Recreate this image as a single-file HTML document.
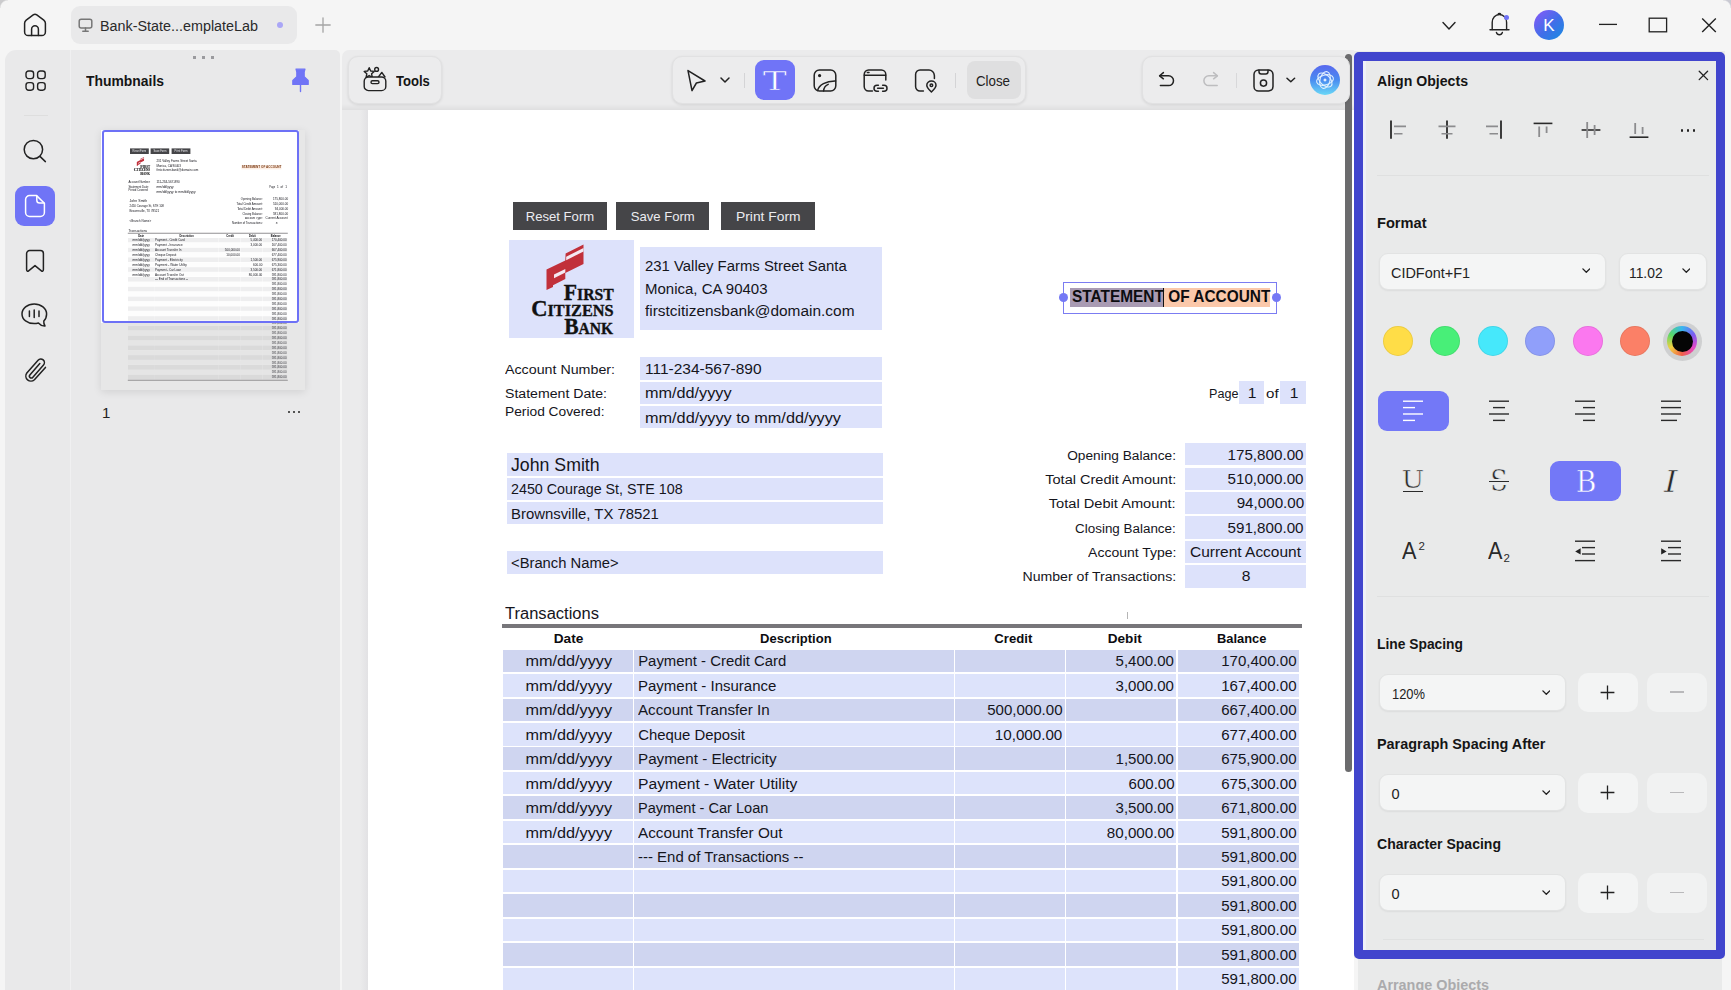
<!DOCTYPE html>
<html lang="en"><head><meta charset="utf-8"><title>Bank Statement - PDF Editor</title>
<style>
html,body{margin:0;padding:0}
body{width:1731px;height:990px;overflow:hidden;background:#f5f5f5;font-family:"Liberation Sans",sans-serif;position:relative;color:#1c1c1c}
.t{position:absolute;white-space:nowrap}
.b{position:absolute}
#page{position:absolute;left:368px;top:110px;width:986px;height:880px;overflow:hidden;background:#fff}
#pgsh{position:absolute;left:360px;top:110px;width:8px;height:880px;background:linear-gradient(90deg,rgba(0,0,0,0),rgba(60,50,80,.05))}
#thumb{position:absolute;left:101px;top:129.8px;width:203.5px;height:260.4px;overflow:hidden;background:#fff;box-shadow:0 2px 8px rgba(0,0,0,.10)}
#thumb .sc{position:absolute;left:0;top:0;width:1018px;height:1302px;transform:scale(0.2);transform-origin:0 0}
</style></head><body>
<svg class="b" style="left:23.0px;top:13.0px;" width="24.0" height="24.0" viewBox="0 0 24 24" fill="none" stroke="#222" stroke-width="1.5" stroke-linecap="round" stroke-linejoin="round"><path d="M1.6 10.2 C1.6 8.8 2.2 8 3.2 7.2 L10.2 1.9 C11.3 1.1 12.7 1.1 13.8 1.9 L20.8 7.2 C21.8 8 22.4 8.8 22.4 10.2 V19 a3.6 3.6 0 0 1 -3.6 3.6 H5.2 A3.6 3.6 0 0 1 1.6 19 Z"/><path d="M8.6 22.4 V16.2 a3.4 3.4 0 0 1 6.8 0 V22.4"/></svg>
<div class="b" style="left:71.0px;top:6.0px;width:226.0px;height:38.0px;background:#e9e9ea;border-radius:9px;"></div>
<svg class="b" style="left:78.0px;top:18.0px;stroke:#777;" width="16.0" height="15.0" viewBox="0 0 16 15" fill="none" stroke="#222" stroke-width="1.5" stroke-linecap="round" stroke-linejoin="round"><rect x="1.2" y="1.2" width="12.6" height="8.8" rx="2"/><path d="M7.5 10 V13 M4.8 13.2 H10.2"/></svg>
<div class="t" style="left:100.4px;top:18.7px;font-size:14.00px;line-height:14.00px;color:#2a2a2a;"><span style="display:inline-block;transform:scaleX(1.0252);transform-origin:left center;">Bank-State...emplateLab</span></div>
<div class="b" style="left:277.0px;top:22.0px;width:6.4px;height:6.4px;background:#aaa6f6;border-radius:50%;"></div>
<svg class="b" style="left:315.0px;top:17.0px;stroke:#a4a4a4;stroke-width:1.3;" width="16.0" height="16.0" viewBox="0 0 16 16" fill="none" stroke="#222" stroke-width="1.5" stroke-linecap="round" stroke-linejoin="round"><path d="M8 0.8 V15.2 M0.8 8 H15.2"/></svg>
<svg class="b" style="left:1442.0px;top:21.0px;stroke-width:1.4;" width="14.0" height="10.0" viewBox="0 0 14 10" fill="none" stroke="#222" stroke-width="1.5" stroke-linecap="round" stroke-linejoin="round"><path d="M1 1.5 L7 8 L13 1.5"/></svg>
<svg class="b" style="left:1489.0px;top:11.0px;stroke-width:1.4;" width="22.0" height="26.0" viewBox="0 0 22 26" fill="none" stroke="#222" stroke-width="1.5" stroke-linecap="round" stroke-linejoin="round"><path d="M3.2 18.6 V11.5 C3.2 6.8 6.4 3.6 10.4 3.6 C14.4 3.6 17.6 6.8 17.6 11.5 V18.6"/><path d="M1 18.8 H20"/><path d="M7.4 21.4 a3.1 3.1 0 0 0 6 0"/><path d="M9 3.5 a1.5 1.5 0 0 1 2.8 0"/></svg>
<div class="b" style="left:1503.6px;top:14.8px;width:5.6px;height:5.6px;background:#6f72f5;border-radius:50%;"></div>
<div class="b" style="left:1534.0px;top:10.0px;width:30.0px;height:30.0px;background:linear-gradient(135deg,#7d5cf6 10%,#3f6fe8 55%,#1c8ae2 95%);border-radius:50%;"></div>
<div class="t" style="left:1249.0px;width:600px;text-align:center;top:16.6px;font-size:17.00px;line-height:17.00px;color:#fff;"><span style="display:inline-block;">K</span></div>
<svg class="b" style="left:1598.0px;top:20.0px;stroke-width:1.3;stroke-linecap:butt;" width="20.0" height="9.0" viewBox="0 0 20 9" fill="none" stroke="#222" stroke-width="1.5" stroke-linecap="round" stroke-linejoin="round"><path d="M1 4.4 H19"/></svg>
<svg class="b" style="left:1648.0px;top:17.0px;stroke-width:1.3;stroke-linejoin:miter;" width="20.0" height="16.0" viewBox="0 0 20 16" fill="none" stroke="#222" stroke-width="1.5" stroke-linecap="round" stroke-linejoin="round"><rect x="1.2" y="1.2" width="17.4" height="13.6"/></svg>
<svg class="b" style="left:1701.0px;top:17.0px;stroke-width:1.4;stroke-linecap:butt;" width="16.0" height="16.0" viewBox="0 0 16 16" fill="none" stroke="#222" stroke-width="1.5" stroke-linecap="round" stroke-linejoin="round"><path d="M1.2 1.4 L14.8 15 M14.8 1.4 L1.2 15"/></svg>
<div class="b" style="left:0.0px;top:0.0px;width:8.0px;height:8.0px;background:radial-gradient(circle at 100% 100%,rgba(0,0,0,0) 7px,#cbcbcd 8.5px);"></div>
<div class="b" style="left:1723.0px;top:0.0px;width:8.0px;height:8.0px;background:radial-gradient(circle at 0% 100%,rgba(0,0,0,0) 7px,#c9c9d2 8.5px);"></div>
<div class="b" style="left:5.0px;top:50.0px;width:335.4px;height:945.0px;background:#e9e9ea;border-radius:11px 5px 0 0;"></div>
<div class="b" style="left:70.0px;top:50.0px;width:1.0px;height:945.0px;background:rgba(255,255,255,.35);"></div>
<svg class="b" style="left:24.5px;top:69.5px;stroke-width:1.4;" width="21.2" height="21.2" viewBox="0 0 21.2 21.2" fill="none" stroke="#222" stroke-width="1.5" stroke-linecap="round" stroke-linejoin="round"><rect x="1.0" y="1.0" width="7.6" height="7.6" rx="2.6"/><rect x="12.6" y="1.0" width="7.6" height="7.6" rx="2.6"/><rect x="1.0" y="12.6" width="7.6" height="7.6" rx="2.6"/><rect x="12.6" y="12.6" width="7.6" height="7.6" rx="2.6"/></svg>
<div class="b" style="left:24.0px;top:115.0px;width:24.0px;height:1.0px;background:#dedede;"></div>
<svg class="b" style="left:23.0px;top:138.5px;" width="24.0" height="24.0" viewBox="0 0 24 24" fill="none" stroke="#222" stroke-width="1.5" stroke-linecap="round" stroke-linejoin="round"><circle cx="10.4" cy="10.6" r="9.2"/><path d="M17.2 17.6 L22.4 22.6"/></svg>
<div class="b" style="left:15.0px;top:186.0px;width:40.0px;height:40.0px;background:#7074f6;border-radius:9px;"></div>
<svg class="b" style="left:24.0px;top:194.0px;stroke:#fff;stroke-width:1.5;" width="22.0" height="24.0" viewBox="0 0 22 24" fill="none" stroke="#222" stroke-width="1.5" stroke-linecap="round" stroke-linejoin="round"><path d="M5.6 1.6 H12.6 L20.4 9.2 V18.4 a4 4 0 0 1 -4 4 H5.6 a4 4 0 0 1 -4 -4 V5.6 a4 4 0 0 1 4 -4 Z"/><path d="M12.8 1.9 V6.2 a2.8 2.8 0 0 0 2.8 2.8 H20"/></svg>
<svg class="b" style="left:25.0px;top:249.0px;" width="20.0" height="24.0" viewBox="0 0 20 24" fill="none" stroke="#222" stroke-width="1.5" stroke-linecap="round" stroke-linejoin="round"><path d="M1.6 4.6 a3 3 0 0 1 3 -3 H15.4 a3 3 0 0 1 3 3 V20.6 C18.4 22 17.4 22.6 16.4 21.8 L10 16.6 L3.6 21.8 C2.6 22.6 1.6 22 1.6 20.6 Z"/></svg>
<svg class="b" style="left:21.0px;top:302.5px;stroke-width:1.5;" width="27.0" height="25.0" viewBox="0 0 27 25" fill="none" stroke="#222" stroke-width="1.5" stroke-linecap="round" stroke-linejoin="round"><path d="M13.2 1 C6.4 1 1 5.4 1 11 C1 16.6 6.4 20.6 13.2 20.6 C14.6 20.6 16 20.4 17.4 20 C18.8 21.6 21 23.2 24 23 C23 21.6 22.6 19.8 22.8 18 C24.6 16.2 25.6 13.8 25.6 11 C25.6 5.4 20 1 13.2 1 Z"/><path d="M8.4 8 V13.4 M13.2 7 V14.6 M18 8 V13.4"/></svg>
<svg class="b" style="left:23.6px;top:357.4px;stroke-width:1.4;" width="26.0" height="28.2" viewBox="0 0 24 26" fill="none" stroke="#222" stroke-width="1.5" stroke-linecap="round" stroke-linejoin="round"><path d="M19.8 9.6 L9.6 21 a4.7 4.7 0 0 1 -7 -6.2 L13 3 a3.3 3.3 0 0 1 5 4.4 L8 18.8 a1.7 1.7 0 0 1 -2.6 -2.2 L14.6 6"/></svg>
<div class="b" style="left:193.0px;top:55.6px;width:2.6px;height:3.8px;background:#9a9a9e;"></div>
<div class="b" style="left:202.0px;top:55.6px;width:2.6px;height:3.8px;background:#9a9a9e;"></div>
<div class="b" style="left:211.0px;top:55.6px;width:2.6px;height:3.8px;background:#9a9a9e;"></div>
<div class="t" style="left:86.2px;top:73.9px;font-size:14.30px;line-height:14.30px;font-weight:700;color:#151515;"><span style="display:inline-block;transform:scaleX(0.9722);transform-origin:left center;">Thumbnails</span></div>
<svg class="b" style="left:291.0px;top:68.0px;" width="19.0" height="25.0" viewBox="0 0 19 25" fill="none" stroke="#222" stroke-width="1.5" stroke-linecap="round" stroke-linejoin="round"><path d="M5 1.2 H14 L13.2 4 V8.6 L17.2 12.4 V16.4 H1.8 V12.4 L5.8 8.6 V4 Z" fill="#7074f6" stroke="#7074f6" stroke-width="1.2"/><path d="M9.5 16.4 V23.6" stroke="#7074f6" stroke-width="1.4"/></svg>
<div class="t" style="left:102.0px;top:405.3px;font-size:15.00px;line-height:15.00px;color:#222;"><span style="display:inline-block;">1</span></div>
<div class="b" style="left:287.5px;top:411.2px;width:2.3px;height:2.3px;background:#222;border-radius:50%;"></div>
<div class="b" style="left:292.5px;top:411.2px;width:2.3px;height:2.3px;background:#222;border-radius:50%;"></div>
<div class="b" style="left:297.5px;top:411.2px;width:2.3px;height:2.3px;background:#222;border-radius:50%;"></div>
<div id="thumb"><div class="sc">
<div class="b" style="left:145.2px;top:92.0px;width:93.8px;height:28.0px;background:#454548;"></div>
<div class="t" style="left:-107.9px;width:600px;text-align:center;top:99.7px;font-size:13.40px;line-height:13.40px;color:#ececf0;"><span style="display:inline-block;transform:scaleX(0.9778);transform-origin:center center;">Reset Form</span></div>
<div class="b" style="left:248.0px;top:92.0px;width:93.2px;height:28.0px;background:#454548;"></div>
<div class="t" style="left:-5.4px;width:600px;text-align:center;top:99.7px;font-size:13.40px;line-height:13.40px;color:#ececf0;"><span style="display:inline-block;transform:scaleX(0.9773);transform-origin:center center;">Save Form</span></div>
<div class="b" style="left:353.0px;top:92.0px;width:93.6px;height:28.0px;background:#454548;"></div>
<div class="t" style="left:99.8px;width:600px;text-align:center;top:99.7px;font-size:13.40px;line-height:13.40px;color:#ececf0;"><span style="display:inline-block;transform:scaleX(1.0320);transform-origin:center center;">Print Form</span></div>
<div class="b" style="left:141.4px;top:129.6px;width:124.6px;height:98.0px;background:transparent;"></div>
<svg class="b" style="left:177.0px;top:133.0px" width="40" height="48" viewBox="545 243 40 48"><polygon fill="#c1303a" points="546.5,290 546.5,269.5 565.3,260.6 565.6,253.5 583.5,244.5 583.5,264 565.3,273 565.3,279 553,285.2 553,287 "/><polygon fill="#f4e9f2" points="566.2,256.7 583.5,248 583.5,251.4 566.2,260.3"/><polygon fill="#f4e9f2" points="554,274.4 565.3,268.9 565.3,272.6 554,278.2"/></svg>
<div class="t" style="left:-354.4px;width:600px;text-align:right;top:174.5px;font-size:16.30px;line-height:16.30px;font-family:'Liberation Serif', serif;font-weight:700;color:#111;-webkit-text-stroke:0.35px #111;"><span style="display:inline-block;transform:scaleX(0.9659);transform-origin:right center;"><span style="font-size:22.5px">F</span>IRST</span></div>
<div class="t" style="left:-354.4px;width:600px;text-align:right;top:191.1px;font-size:16.30px;line-height:16.30px;font-family:'Liberation Serif', serif;font-weight:700;color:#111;-webkit-text-stroke:0.35px #111;"><span style="display:inline-block;"><span style="font-size:22.5px">C</span>ITIZENS</span></div>
<div class="t" style="left:-354.4px;width:600px;text-align:right;top:208.9px;font-size:16.30px;line-height:16.30px;font-family:'Liberation Serif', serif;font-weight:700;color:#111;-webkit-text-stroke:0.35px #111;"><span style="display:inline-block;transform:scaleX(0.9570);transform-origin:right center;"><span style="font-size:22.5px">B</span>ANK</span></div>
<div class="b" style="left:272.0px;top:137.0px;width:242.0px;height:83.0px;background:transparent;"></div>
<div class="t" style="left:277.0px;top:149.4px;font-size:14.90px;line-height:14.90px;color:#15151c;"><span style="display:inline-block;">231 Valley Farms Street Santa</span></div>
<div class="t" style="left:277.0px;top:171.8px;font-size:14.90px;line-height:14.90px;color:#15151c;"><span style="display:inline-block;transform:scaleX(1.0067);transform-origin:left center;">Monica, CA 90403</span></div>
<div class="t" style="left:277.0px;top:193.8px;font-size:14.90px;line-height:14.90px;color:#15151c;"><span style="display:inline-block;transform:scaleX(1.0363);transform-origin:left center;">firstcitizensbank@domain.com</span></div>
<div class="t" style="left:137.0px;top:252.8px;font-size:13.70px;line-height:13.70px;color:#15151c;"><span style="display:inline-block;transform:scaleX(1.0402);transform-origin:left center;">Account Number:</span></div>
<div class="t" style="left:137.0px;top:277.4px;font-size:13.70px;line-height:13.70px;color:#15151c;"><span style="display:inline-block;transform:scaleX(1.0311);transform-origin:left center;">Statement Date:</span></div>
<div class="t" style="left:137.0px;top:295.4px;font-size:13.70px;line-height:13.70px;color:#15151c;"><span style="display:inline-block;transform:scaleX(1.0058);transform-origin:left center;">Period Covered:</span></div>
<div class="b" style="left:272.0px;top:247.0px;width:242.0px;height:23.0px;background:transparent;"></div>
<div class="b" style="left:272.0px;top:272.0px;width:242.0px;height:21.6px;background:transparent;"></div>
<div class="b" style="left:272.0px;top:296.0px;width:242.0px;height:22.0px;background:transparent;"></div>
<div class="t" style="left:277.0px;top:252.0px;font-size:14.90px;line-height:14.90px;color:#15151c;"><span style="display:inline-block;transform:scaleX(1.0397);transform-origin:left center;">111-234-567-890</span></div>
<div class="t" style="left:277.0px;top:276.4px;font-size:14.90px;line-height:14.90px;color:#15151c;"><span style="display:inline-block;transform:scaleX(1.0902);transform-origin:left center;">mm/dd/yyyy</span></div>
<div class="t" style="left:277.0px;top:301.0px;font-size:14.90px;line-height:14.90px;color:#15151c;"><span style="display:inline-block;transform:scaleX(1.0916);transform-origin:left center;">mm/dd/yyyy to mm/dd/yyyy</span></div>
<div class="b" style="left:702.0px;top:178.4px;width:200.0px;height:18.2px;background:#fdeee4;"></div>
<div class="t" style="left:703.6px;top:178.9px;font-size:15.90px;line-height:15.90px;font-weight:700;color:#7c3a12;"><span style="display:inline-block;transform:scaleX(0.9702);transform-origin:left center;">STATEMENT OF ACCOUNT</span></div>
<div class="b" style="left:871.0px;top:271.4px;width:24.6px;height:22.2px;background:transparent;"></div>
<div class="b" style="left:912.0px;top:271.4px;width:25.6px;height:22.2px;background:transparent;"></div>
<div class="t" style="left:840.6px;top:277.4px;font-size:13.70px;line-height:13.70px;color:#15151c;"><span style="display:inline-block;transform:scaleX(0.9196);transform-origin:left center;">Page</span></div>
<div class="t" style="left:898.0px;top:277.4px;font-size:13.70px;line-height:13.70px;color:#15151c;"><span style="display:inline-block;transform:scaleX(1.1031);transform-origin:left center;">of</span></div>
<div class="t" style="left:584.4px;width:600px;text-align:center;top:276.4px;font-size:14.90px;line-height:14.90px;color:#15151c;"><span style="display:inline-block;transform:scaleX(1.0500);transform-origin:center center;">1</span></div>
<div class="t" style="left:626.2px;width:600px;text-align:center;top:276.4px;font-size:14.90px;line-height:14.90px;color:#15151c;"><span style="display:inline-block;transform:scaleX(1.0500);transform-origin:center center;">1</span></div>
<div class="b" style="left:139.0px;top:343.4px;width:376.0px;height:22.2px;background:transparent;"></div>
<div class="b" style="left:139.0px;top:368.0px;width:376.0px;height:22.0px;background:transparent;"></div>
<div class="b" style="left:139.0px;top:392.4px;width:376.0px;height:22.0px;background:transparent;"></div>
<div class="b" style="left:139.0px;top:441.0px;width:376.0px;height:22.6px;background:transparent;"></div>
<div class="t" style="left:143.0px;top:347.1px;font-size:17.60px;line-height:17.60px;color:#15151c;"><span style="display:inline-block;transform:scaleX(1.0066);transform-origin:left center;">John Smith</span></div>
<div class="t" style="left:143.0px;top:372.4px;font-size:14.90px;line-height:14.90px;color:#15151c;"><span style="display:inline-block;transform:scaleX(0.9597);transform-origin:left center;">2450 Courage St, STE 108</span></div>
<div class="t" style="left:143.0px;top:397.0px;font-size:14.90px;line-height:14.90px;color:#15151c;"><span style="display:inline-block;">Brownsville, TX 78521</span></div>
<div class="t" style="left:143.0px;top:445.8px;font-size:14.90px;line-height:14.90px;color:#15151c;"><span style="display:inline-block;transform:scaleX(0.9923);transform-origin:left center;">&lt;Branch Name&gt;</span></div>
<div class="b" style="left:817.0px;top:333.0px;width:121.0px;height:22.4px;background:transparent;"></div>
<div class="t" style="left:208.0px;width:600px;text-align:right;top:338.8px;font-size:13.70px;line-height:13.70px;color:#15151c;"><span style="display:inline-block;">Opening Balance:</span></div>
<div class="t" style="left:336.0px;width:600px;text-align:right;top:337.8px;font-size:14.90px;line-height:14.90px;color:#15151c;"><span style="display:inline-block;transform:scaleX(1.0197);transform-origin:right center;">175,800.00</span></div>
<div class="b" style="left:817.0px;top:357.6px;width:121.0px;height:22.4px;background:transparent;"></div>
<div class="t" style="left:208.0px;width:600px;text-align:right;top:363.2px;font-size:13.70px;line-height:13.70px;color:#15151c;"><span style="display:inline-block;transform:scaleX(1.0629);transform-origin:right center;">Total Credit Amount:</span></div>
<div class="t" style="left:336.0px;width:600px;text-align:right;top:362.2px;font-size:14.90px;line-height:14.90px;color:#15151c;"><span style="display:inline-block;transform:scaleX(1.0197);transform-origin:right center;">510,000.00</span></div>
<div class="b" style="left:817.0px;top:382.0px;width:121.0px;height:22.4px;background:transparent;"></div>
<div class="t" style="left:208.0px;width:600px;text-align:right;top:387.4px;font-size:13.70px;line-height:13.70px;color:#15151c;"><span style="display:inline-block;transform:scaleX(1.0699);transform-origin:right center;">Total Debit Amount:</span></div>
<div class="t" style="left:336.0px;width:600px;text-align:right;top:386.4px;font-size:14.90px;line-height:14.90px;color:#15151c;"><span style="display:inline-block;transform:scaleX(1.0204);transform-origin:right center;">94,000.00</span></div>
<div class="b" style="left:817.0px;top:406.4px;width:121.0px;height:22.4px;background:transparent;"></div>
<div class="t" style="left:208.0px;width:600px;text-align:right;top:412.0px;font-size:13.70px;line-height:13.70px;color:#15151c;"><span style="display:inline-block;transform:scaleX(0.9794);transform-origin:right center;">Closing Balance:</span></div>
<div class="t" style="left:336.0px;width:600px;text-align:right;top:411.0px;font-size:14.90px;line-height:14.90px;color:#15151c;"><span style="display:inline-block;transform:scaleX(1.0197);transform-origin:right center;">591,800.00</span></div>
<div class="b" style="left:817.0px;top:431.0px;width:121.0px;height:22.4px;background:transparent;"></div>
<div class="t" style="left:208.0px;width:600px;text-align:right;top:436.2px;font-size:13.70px;line-height:13.70px;color:#15151c;"><span style="display:inline-block;transform:scaleX(1.0220);transform-origin:right center;">Account Type:</span></div>
<div class="t" style="left:821.6px;top:435.2px;font-size:14.90px;line-height:14.90px;color:#15151c;"><span style="display:inline-block;transform:scaleX(1.0395);transform-origin:left center;">Current Account</span></div>
<div class="b" style="left:817.0px;top:455.4px;width:121.0px;height:22.4px;background:transparent;"></div>
<div class="t" style="left:208.0px;width:600px;text-align:right;top:460.4px;font-size:13.70px;line-height:13.70px;color:#15151c;"><span style="display:inline-block;transform:scaleX(1.0301);transform-origin:right center;">Number of Transactions:</span></div>
<div class="t" style="left:578.4px;width:600px;text-align:center;top:459.4px;font-size:14.90px;line-height:14.90px;color:#15151c;"><span style="display:inline-block;transform:scaleX(1.0500);transform-origin:center center;">8</span></div>
<div class="t" style="left:137.4px;top:496.4px;font-size:15.60px;line-height:15.60px;color:#15151c;"><span style="display:inline-block;transform:scaleX(1.0597);transform-origin:left center;">Transactions</span></div>
<div class="b" style="left:134.0px;top:513.8px;width:800.0px;height:4.4px;background:#77767a;"></div>
<div class="t" style="left:-99.8px;width:600px;text-align:center;top:521.7px;font-size:13.40px;line-height:13.40px;font-weight:700;color:#0c0c10;"><span style="display:inline-block;transform:scaleX(1.0196);transform-origin:center center;">Date</span></div>
<div class="t" style="left:127.4px;width:600px;text-align:center;top:521.7px;font-size:13.40px;line-height:13.40px;font-weight:700;color:#0c0c10;"><span style="display:inline-block;transform:scaleX(0.9719);transform-origin:center center;">Description</span></div>
<div class="t" style="left:345.4px;width:600px;text-align:center;top:521.7px;font-size:13.40px;line-height:13.40px;font-weight:700;color:#0c0c10;"><span style="display:inline-block;transform:scaleX(0.9818);transform-origin:center center;">Credit</span></div>
<div class="t" style="left:456.6px;width:600px;text-align:center;top:521.7px;font-size:13.40px;line-height:13.40px;font-weight:700;color:#0c0c10;"><span style="display:inline-block;transform:scaleX(1.0154);transform-origin:center center;">Debit</span></div>
<div class="t" style="left:573.7px;width:600px;text-align:center;top:521.7px;font-size:13.40px;line-height:13.40px;font-weight:700;color:#0c0c10;"><span style="display:inline-block;transform:scaleX(0.9618);transform-origin:center center;">Balance</span></div>
<div class="b" style="left:135.0px;top:539.6px;width:129.6px;height:22.5px;background:#eeeeef;"></div>
<div class="b" style="left:266.4px;top:539.6px;width:319.2px;height:22.5px;background:#eeeeef;"></div>
<div class="b" style="left:587.0px;top:539.6px;width:110.0px;height:22.5px;background:#eeeeef;"></div>
<div class="b" style="left:698.4px;top:539.6px;width:109.6px;height:22.5px;background:#eeeeef;"></div>
<div class="b" style="left:810.0px;top:539.6px;width:120.8px;height:22.5px;background:#eeeeef;"></div>
<div class="t" style="left:-99.7px;width:600px;text-align:center;top:544.4px;font-size:14.90px;line-height:14.90px;color:#15151c;"><span style="display:inline-block;transform:scaleX(1.0902);transform-origin:center center;">mm/dd/yyyy</span></div>
<div class="t" style="left:270.2px;top:544.4px;font-size:14.90px;line-height:14.90px;color:#15151c;"><span style="display:inline-block;">Payment - Credit Card</span></div>
<div class="t" style="left:206.2px;width:600px;text-align:right;top:544.4px;font-size:14.90px;line-height:14.90px;color:#15151c;"><span style="display:inline-block;transform:scaleX(1.0074);transform-origin:right center;">5,400.00</span></div>
<div class="t" style="left:328.6px;width:600px;text-align:right;top:544.4px;font-size:14.90px;line-height:14.90px;color:#15151c;"><span style="display:inline-block;transform:scaleX(1.0117);transform-origin:right center;">170,400.00</span></div>
<div class="b" style="left:135.0px;top:564.1px;width:129.6px;height:22.5px;background:#fdfdfd;"></div>
<div class="b" style="left:266.4px;top:564.1px;width:319.2px;height:22.5px;background:#fdfdfd;"></div>
<div class="b" style="left:587.0px;top:564.1px;width:110.0px;height:22.5px;background:#fdfdfd;"></div>
<div class="b" style="left:698.4px;top:564.1px;width:109.6px;height:22.5px;background:#fdfdfd;"></div>
<div class="b" style="left:810.0px;top:564.1px;width:120.8px;height:22.5px;background:#fdfdfd;"></div>
<div class="t" style="left:-99.7px;width:600px;text-align:center;top:568.8px;font-size:14.90px;line-height:14.90px;color:#15151c;"><span style="display:inline-block;transform:scaleX(1.0902);transform-origin:center center;">mm/dd/yyyy</span></div>
<div class="t" style="left:270.2px;top:568.8px;font-size:14.90px;line-height:14.90px;color:#15151c;"><span style="display:inline-block;transform:scaleX(1.0073);transform-origin:left center;">Payment - Insurance</span></div>
<div class="t" style="left:206.2px;width:600px;text-align:right;top:568.8px;font-size:14.90px;line-height:14.90px;color:#15151c;"><span style="display:inline-block;transform:scaleX(1.0074);transform-origin:right center;">3,000.00</span></div>
<div class="t" style="left:328.6px;width:600px;text-align:right;top:568.8px;font-size:14.90px;line-height:14.90px;color:#15151c;"><span style="display:inline-block;transform:scaleX(1.0117);transform-origin:right center;">167,400.00</span></div>
<div class="b" style="left:135.0px;top:588.5px;width:129.6px;height:22.5px;background:#eeeeef;"></div>
<div class="b" style="left:266.4px;top:588.5px;width:319.2px;height:22.5px;background:#eeeeef;"></div>
<div class="b" style="left:587.0px;top:588.5px;width:110.0px;height:22.5px;background:#eeeeef;"></div>
<div class="b" style="left:698.4px;top:588.5px;width:109.6px;height:22.5px;background:#eeeeef;"></div>
<div class="b" style="left:810.0px;top:588.5px;width:120.8px;height:22.5px;background:#eeeeef;"></div>
<div class="t" style="left:-99.7px;width:600px;text-align:center;top:593.3px;font-size:14.90px;line-height:14.90px;color:#15151c;"><span style="display:inline-block;transform:scaleX(1.0902);transform-origin:center center;">mm/dd/yyyy</span></div>
<div class="t" style="left:270.2px;top:593.3px;font-size:14.90px;line-height:14.90px;color:#15151c;"><span style="display:inline-block;transform:scaleX(1.0192);transform-origin:left center;">Account Transfer In</span></div>
<div class="t" style="left:94.6px;width:600px;text-align:right;top:593.3px;font-size:14.90px;line-height:14.90px;color:#15151c;"><span style="display:inline-block;transform:scaleX(1.0117);transform-origin:right center;">500,000.00</span></div>
<div class="t" style="left:328.6px;width:600px;text-align:right;top:593.3px;font-size:14.90px;line-height:14.90px;color:#15151c;"><span style="display:inline-block;transform:scaleX(1.0117);transform-origin:right center;">667,400.00</span></div>
<div class="b" style="left:135.0px;top:613.0px;width:129.6px;height:22.5px;background:#fdfdfd;"></div>
<div class="b" style="left:266.4px;top:613.0px;width:319.2px;height:22.5px;background:#fdfdfd;"></div>
<div class="b" style="left:587.0px;top:613.0px;width:110.0px;height:22.5px;background:#fdfdfd;"></div>
<div class="b" style="left:698.4px;top:613.0px;width:109.6px;height:22.5px;background:#fdfdfd;"></div>
<div class="b" style="left:810.0px;top:613.0px;width:120.8px;height:22.5px;background:#fdfdfd;"></div>
<div class="t" style="left:-99.7px;width:600px;text-align:center;top:617.7px;font-size:14.90px;line-height:14.90px;color:#15151c;"><span style="display:inline-block;transform:scaleX(1.0902);transform-origin:center center;">mm/dd/yyyy</span></div>
<div class="t" style="left:270.2px;top:617.7px;font-size:14.90px;line-height:14.90px;color:#15151c;"><span style="display:inline-block;">Cheque Deposit</span></div>
<div class="t" style="left:94.6px;width:600px;text-align:right;top:617.7px;font-size:14.90px;line-height:14.90px;color:#15151c;"><span style="display:inline-block;transform:scaleX(1.0174);transform-origin:right center;">10,000.00</span></div>
<div class="t" style="left:328.6px;width:600px;text-align:right;top:617.7px;font-size:14.90px;line-height:14.90px;color:#15151c;"><span style="display:inline-block;transform:scaleX(1.0117);transform-origin:right center;">677,400.00</span></div>
<div class="b" style="left:135.0px;top:637.4px;width:129.6px;height:22.5px;background:#eeeeef;"></div>
<div class="b" style="left:266.4px;top:637.4px;width:319.2px;height:22.5px;background:#eeeeef;"></div>
<div class="b" style="left:587.0px;top:637.4px;width:110.0px;height:22.5px;background:#eeeeef;"></div>
<div class="b" style="left:698.4px;top:637.4px;width:109.6px;height:22.5px;background:#eeeeef;"></div>
<div class="b" style="left:810.0px;top:637.4px;width:120.8px;height:22.5px;background:#eeeeef;"></div>
<div class="t" style="left:-99.7px;width:600px;text-align:center;top:642.2px;font-size:14.90px;line-height:14.90px;color:#15151c;"><span style="display:inline-block;transform:scaleX(1.0902);transform-origin:center center;">mm/dd/yyyy</span></div>
<div class="t" style="left:270.2px;top:642.2px;font-size:14.90px;line-height:14.90px;color:#15151c;"><span style="display:inline-block;transform:scaleX(1.0213);transform-origin:left center;">Payment - Electricity</span></div>
<div class="t" style="left:206.2px;width:600px;text-align:right;top:642.2px;font-size:14.90px;line-height:14.90px;color:#15151c;"><span style="display:inline-block;transform:scaleX(1.0074);transform-origin:right center;">1,500.00</span></div>
<div class="t" style="left:328.6px;width:600px;text-align:right;top:642.2px;font-size:14.90px;line-height:14.90px;color:#15151c;"><span style="display:inline-block;transform:scaleX(1.0117);transform-origin:right center;">675,900.00</span></div>
<div class="b" style="left:135.0px;top:661.9px;width:129.6px;height:22.5px;background:#fdfdfd;"></div>
<div class="b" style="left:266.4px;top:661.9px;width:319.2px;height:22.5px;background:#fdfdfd;"></div>
<div class="b" style="left:587.0px;top:661.9px;width:110.0px;height:22.5px;background:#fdfdfd;"></div>
<div class="b" style="left:698.4px;top:661.9px;width:109.6px;height:22.5px;background:#fdfdfd;"></div>
<div class="b" style="left:810.0px;top:661.9px;width:120.8px;height:22.5px;background:#fdfdfd;"></div>
<div class="t" style="left:-99.7px;width:600px;text-align:center;top:666.6px;font-size:14.90px;line-height:14.90px;color:#15151c;"><span style="display:inline-block;transform:scaleX(1.0902);transform-origin:center center;">mm/dd/yyyy</span></div>
<div class="t" style="left:270.2px;top:666.6px;font-size:14.90px;line-height:14.90px;color:#15151c;"><span style="display:inline-block;transform:scaleX(1.0507);transform-origin:left center;">Payment - Water Utility</span></div>
<div class="t" style="left:206.2px;width:600px;text-align:right;top:666.6px;font-size:14.90px;line-height:14.90px;color:#15151c;"><span style="display:inline-block;transform:scaleX(1.0099);transform-origin:right center;">600.00</span></div>
<div class="t" style="left:328.6px;width:600px;text-align:right;top:666.6px;font-size:14.90px;line-height:14.90px;color:#15151c;"><span style="display:inline-block;transform:scaleX(1.0117);transform-origin:right center;">675,300.00</span></div>
<div class="b" style="left:135.0px;top:686.3px;width:129.6px;height:22.5px;background:#eeeeef;"></div>
<div class="b" style="left:266.4px;top:686.3px;width:319.2px;height:22.5px;background:#eeeeef;"></div>
<div class="b" style="left:587.0px;top:686.3px;width:110.0px;height:22.5px;background:#eeeeef;"></div>
<div class="b" style="left:698.4px;top:686.3px;width:109.6px;height:22.5px;background:#eeeeef;"></div>
<div class="b" style="left:810.0px;top:686.3px;width:120.8px;height:22.5px;background:#eeeeef;"></div>
<div class="t" style="left:-99.7px;width:600px;text-align:center;top:691.1px;font-size:14.90px;line-height:14.90px;color:#15151c;"><span style="display:inline-block;transform:scaleX(1.0902);transform-origin:center center;">mm/dd/yyyy</span></div>
<div class="t" style="left:270.2px;top:691.1px;font-size:14.90px;line-height:14.90px;color:#15151c;"><span style="display:inline-block;transform:scaleX(0.9785);transform-origin:left center;">Payment - Car Loan</span></div>
<div class="t" style="left:206.2px;width:600px;text-align:right;top:691.1px;font-size:14.90px;line-height:14.90px;color:#15151c;"><span style="display:inline-block;transform:scaleX(1.0074);transform-origin:right center;">3,500.00</span></div>
<div class="t" style="left:328.6px;width:600px;text-align:right;top:691.1px;font-size:14.90px;line-height:14.90px;color:#15151c;"><span style="display:inline-block;transform:scaleX(1.0117);transform-origin:right center;">671,800.00</span></div>
<div class="b" style="left:135.0px;top:710.8px;width:129.6px;height:22.5px;background:#fdfdfd;"></div>
<div class="b" style="left:266.4px;top:710.8px;width:319.2px;height:22.5px;background:#fdfdfd;"></div>
<div class="b" style="left:587.0px;top:710.8px;width:110.0px;height:22.5px;background:#fdfdfd;"></div>
<div class="b" style="left:698.4px;top:710.8px;width:109.6px;height:22.5px;background:#fdfdfd;"></div>
<div class="b" style="left:810.0px;top:710.8px;width:120.8px;height:22.5px;background:#fdfdfd;"></div>
<div class="t" style="left:-99.7px;width:600px;text-align:center;top:715.5px;font-size:14.90px;line-height:14.90px;color:#15151c;"><span style="display:inline-block;transform:scaleX(1.0902);transform-origin:center center;">mm/dd/yyyy</span></div>
<div class="t" style="left:270.2px;top:715.5px;font-size:14.90px;line-height:14.90px;color:#15151c;"><span style="display:inline-block;transform:scaleX(1.0277);transform-origin:left center;">Account Transfer Out</span></div>
<div class="t" style="left:206.2px;width:600px;text-align:right;top:715.5px;font-size:14.90px;line-height:14.90px;color:#15151c;"><span style="display:inline-block;transform:scaleX(1.0174);transform-origin:right center;">80,000.00</span></div>
<div class="t" style="left:328.6px;width:600px;text-align:right;top:715.5px;font-size:14.90px;line-height:14.90px;color:#15151c;"><span style="display:inline-block;transform:scaleX(1.0117);transform-origin:right center;">591,800.00</span></div>
<div class="b" style="left:135.0px;top:735.2px;width:129.6px;height:22.5px;background:#eeeeef;"></div>
<div class="b" style="left:266.4px;top:735.2px;width:319.2px;height:22.5px;background:#eeeeef;"></div>
<div class="b" style="left:587.0px;top:735.2px;width:110.0px;height:22.5px;background:#eeeeef;"></div>
<div class="b" style="left:698.4px;top:735.2px;width:109.6px;height:22.5px;background:#eeeeef;"></div>
<div class="b" style="left:810.0px;top:735.2px;width:120.8px;height:22.5px;background:#eeeeef;"></div>
<div class="t" style="left:270.2px;top:740.0px;font-size:14.90px;line-height:14.90px;color:#15151c;"><span style="display:inline-block;transform:scaleX(1.0043);transform-origin:left center;">--- End of Transactions --</span></div>
<div class="t" style="left:328.6px;width:600px;text-align:right;top:740.0px;font-size:14.90px;line-height:14.90px;color:#15151c;"><span style="display:inline-block;transform:scaleX(1.0117);transform-origin:right center;">591,800.00</span></div>
<div class="b" style="left:135.0px;top:759.6px;width:129.6px;height:22.5px;background:#fdfdfd;"></div>
<div class="b" style="left:266.4px;top:759.6px;width:319.2px;height:22.5px;background:#fdfdfd;"></div>
<div class="b" style="left:587.0px;top:759.6px;width:110.0px;height:22.5px;background:#fdfdfd;"></div>
<div class="b" style="left:698.4px;top:759.6px;width:109.6px;height:22.5px;background:#fdfdfd;"></div>
<div class="b" style="left:810.0px;top:759.6px;width:120.8px;height:22.5px;background:#fdfdfd;"></div>
<div class="t" style="left:328.6px;width:600px;text-align:right;top:764.4px;font-size:14.90px;line-height:14.90px;color:#15151c;"><span style="display:inline-block;transform:scaleX(1.0117);transform-origin:right center;">591,800.00</span></div>
<div class="b" style="left:135.0px;top:784.1px;width:129.6px;height:22.5px;background:#eeeeef;"></div>
<div class="b" style="left:266.4px;top:784.1px;width:319.2px;height:22.5px;background:#eeeeef;"></div>
<div class="b" style="left:587.0px;top:784.1px;width:110.0px;height:22.5px;background:#eeeeef;"></div>
<div class="b" style="left:698.4px;top:784.1px;width:109.6px;height:22.5px;background:#eeeeef;"></div>
<div class="b" style="left:810.0px;top:784.1px;width:120.8px;height:22.5px;background:#eeeeef;"></div>
<div class="t" style="left:328.6px;width:600px;text-align:right;top:788.9px;font-size:14.90px;line-height:14.90px;color:#15151c;"><span style="display:inline-block;transform:scaleX(1.0117);transform-origin:right center;">591,800.00</span></div>
<div class="b" style="left:135.0px;top:808.5px;width:129.6px;height:22.5px;background:#fdfdfd;"></div>
<div class="b" style="left:266.4px;top:808.5px;width:319.2px;height:22.5px;background:#fdfdfd;"></div>
<div class="b" style="left:587.0px;top:808.5px;width:110.0px;height:22.5px;background:#fdfdfd;"></div>
<div class="b" style="left:698.4px;top:808.5px;width:109.6px;height:22.5px;background:#fdfdfd;"></div>
<div class="b" style="left:810.0px;top:808.5px;width:120.8px;height:22.5px;background:#fdfdfd;"></div>
<div class="t" style="left:328.6px;width:600px;text-align:right;top:813.3px;font-size:14.90px;line-height:14.90px;color:#15151c;"><span style="display:inline-block;transform:scaleX(1.0117);transform-origin:right center;">591,800.00</span></div>
<div class="b" style="left:135.0px;top:833.0px;width:129.6px;height:22.5px;background:#eeeeef;"></div>
<div class="b" style="left:266.4px;top:833.0px;width:319.2px;height:22.5px;background:#eeeeef;"></div>
<div class="b" style="left:587.0px;top:833.0px;width:110.0px;height:22.5px;background:#eeeeef;"></div>
<div class="b" style="left:698.4px;top:833.0px;width:109.6px;height:22.5px;background:#eeeeef;"></div>
<div class="b" style="left:810.0px;top:833.0px;width:120.8px;height:22.5px;background:#eeeeef;"></div>
<div class="t" style="left:328.6px;width:600px;text-align:right;top:837.8px;font-size:14.90px;line-height:14.90px;color:#15151c;"><span style="display:inline-block;transform:scaleX(1.0117);transform-origin:right center;">591,800.00</span></div>
<div class="b" style="left:135.0px;top:857.5px;width:129.6px;height:22.5px;background:#fdfdfd;"></div>
<div class="b" style="left:266.4px;top:857.5px;width:319.2px;height:22.5px;background:#fdfdfd;"></div>
<div class="b" style="left:587.0px;top:857.5px;width:110.0px;height:22.5px;background:#fdfdfd;"></div>
<div class="b" style="left:698.4px;top:857.5px;width:109.6px;height:22.5px;background:#fdfdfd;"></div>
<div class="b" style="left:810.0px;top:857.5px;width:120.8px;height:22.5px;background:#fdfdfd;"></div>
<div class="t" style="left:328.6px;width:600px;text-align:right;top:862.2px;font-size:14.90px;line-height:14.90px;color:#15151c;"><span style="display:inline-block;transform:scaleX(1.0117);transform-origin:right center;">591,800.00</span></div>
<div class="b" style="left:135.0px;top:881.9px;width:129.6px;height:22.5px;background:#eeeeef;"></div>
<div class="b" style="left:266.4px;top:881.9px;width:319.2px;height:22.5px;background:#eeeeef;"></div>
<div class="b" style="left:587.0px;top:881.9px;width:110.0px;height:22.5px;background:#eeeeef;"></div>
<div class="b" style="left:698.4px;top:881.9px;width:109.6px;height:22.5px;background:#eeeeef;"></div>
<div class="b" style="left:810.0px;top:881.9px;width:120.8px;height:22.5px;background:#eeeeef;"></div>
<div class="t" style="left:328.6px;width:600px;text-align:right;top:886.7px;font-size:14.90px;line-height:14.90px;color:#15151c;"><span style="display:inline-block;transform:scaleX(1.0117);transform-origin:right center;">591,800.00</span></div>
<div class="b" style="left:135.0px;top:906.4px;width:129.6px;height:22.5px;background:#fdfdfd;"></div>
<div class="b" style="left:266.4px;top:906.4px;width:319.2px;height:22.5px;background:#fdfdfd;"></div>
<div class="b" style="left:587.0px;top:906.4px;width:110.0px;height:22.5px;background:#fdfdfd;"></div>
<div class="b" style="left:698.4px;top:906.4px;width:109.6px;height:22.5px;background:#fdfdfd;"></div>
<div class="b" style="left:810.0px;top:906.4px;width:120.8px;height:22.5px;background:#fdfdfd;"></div>
<div class="t" style="left:328.6px;width:600px;text-align:right;top:911.1px;font-size:14.90px;line-height:14.90px;color:#15151c;"><span style="display:inline-block;transform:scaleX(1.0117);transform-origin:right center;">591,800.00</span></div>
<div class="b" style="left:135.0px;top:930.8px;width:129.6px;height:22.5px;background:#eeeeef;"></div>
<div class="b" style="left:266.4px;top:930.8px;width:319.2px;height:22.5px;background:#eeeeef;"></div>
<div class="b" style="left:587.0px;top:930.8px;width:110.0px;height:22.5px;background:#eeeeef;"></div>
<div class="b" style="left:698.4px;top:930.8px;width:109.6px;height:22.5px;background:#eeeeef;"></div>
<div class="b" style="left:810.0px;top:930.8px;width:120.8px;height:22.5px;background:#eeeeef;"></div>
<div class="t" style="left:328.6px;width:600px;text-align:right;top:935.6px;font-size:14.90px;line-height:14.90px;color:#15151c;"><span style="display:inline-block;transform:scaleX(1.0117);transform-origin:right center;">591,800.00</span></div>
<div class="b" style="left:135.0px;top:955.2px;width:129.6px;height:22.5px;background:#fdfdfd;"></div>
<div class="b" style="left:266.4px;top:955.2px;width:319.2px;height:22.5px;background:#fdfdfd;"></div>
<div class="b" style="left:587.0px;top:955.2px;width:110.0px;height:22.5px;background:#fdfdfd;"></div>
<div class="b" style="left:698.4px;top:955.2px;width:109.6px;height:22.5px;background:#fdfdfd;"></div>
<div class="b" style="left:810.0px;top:955.2px;width:120.8px;height:22.5px;background:#fdfdfd;"></div>
<div class="t" style="left:328.6px;width:600px;text-align:right;top:960.0px;font-size:14.90px;line-height:14.90px;color:#15151c;"><span style="display:inline-block;transform:scaleX(1.0117);transform-origin:right center;">591,800.00</span></div>
<div class="b" style="left:135.0px;top:979.7px;width:129.6px;height:22.5px;background:#eeeeef;"></div>
<div class="b" style="left:266.4px;top:979.7px;width:319.2px;height:22.5px;background:#eeeeef;"></div>
<div class="b" style="left:587.0px;top:979.7px;width:110.0px;height:22.5px;background:#eeeeef;"></div>
<div class="b" style="left:698.4px;top:979.7px;width:109.6px;height:22.5px;background:#eeeeef;"></div>
<div class="b" style="left:810.0px;top:979.7px;width:120.8px;height:22.5px;background:#eeeeef;"></div>
<div class="t" style="left:328.6px;width:600px;text-align:right;top:984.5px;font-size:14.90px;line-height:14.90px;color:#15151c;"><span style="display:inline-block;transform:scaleX(1.0117);transform-origin:right center;">591,800.00</span></div>
<div class="b" style="left:135.0px;top:1004.2px;width:129.6px;height:22.5px;background:#fdfdfd;"></div>
<div class="b" style="left:266.4px;top:1004.2px;width:319.2px;height:22.5px;background:#fdfdfd;"></div>
<div class="b" style="left:587.0px;top:1004.2px;width:110.0px;height:22.5px;background:#fdfdfd;"></div>
<div class="b" style="left:698.4px;top:1004.2px;width:109.6px;height:22.5px;background:#fdfdfd;"></div>
<div class="b" style="left:810.0px;top:1004.2px;width:120.8px;height:22.5px;background:#fdfdfd;"></div>
<div class="t" style="left:328.6px;width:600px;text-align:right;top:1008.9px;font-size:14.90px;line-height:14.90px;color:#15151c;"><span style="display:inline-block;transform:scaleX(1.0117);transform-origin:right center;">591,800.00</span></div>
<div class="b" style="left:135.0px;top:1028.6px;width:129.6px;height:22.5px;background:#eeeeef;"></div>
<div class="b" style="left:266.4px;top:1028.6px;width:319.2px;height:22.5px;background:#eeeeef;"></div>
<div class="b" style="left:587.0px;top:1028.6px;width:110.0px;height:22.5px;background:#eeeeef;"></div>
<div class="b" style="left:698.4px;top:1028.6px;width:109.6px;height:22.5px;background:#eeeeef;"></div>
<div class="b" style="left:810.0px;top:1028.6px;width:120.8px;height:22.5px;background:#eeeeef;"></div>
<div class="t" style="left:328.6px;width:600px;text-align:right;top:1033.4px;font-size:14.90px;line-height:14.90px;color:#15151c;"><span style="display:inline-block;transform:scaleX(1.0117);transform-origin:right center;">591,800.00</span></div>
<div class="b" style="left:135.0px;top:1053.0px;width:129.6px;height:22.5px;background:#fdfdfd;"></div>
<div class="b" style="left:266.4px;top:1053.0px;width:319.2px;height:22.5px;background:#fdfdfd;"></div>
<div class="b" style="left:587.0px;top:1053.0px;width:110.0px;height:22.5px;background:#fdfdfd;"></div>
<div class="b" style="left:698.4px;top:1053.0px;width:109.6px;height:22.5px;background:#fdfdfd;"></div>
<div class="b" style="left:810.0px;top:1053.0px;width:120.8px;height:22.5px;background:#fdfdfd;"></div>
<div class="t" style="left:328.6px;width:600px;text-align:right;top:1057.8px;font-size:14.90px;line-height:14.90px;color:#15151c;"><span style="display:inline-block;transform:scaleX(1.0117);transform-origin:right center;">591,800.00</span></div>
<div class="b" style="left:135.0px;top:1077.5px;width:129.6px;height:22.5px;background:#eeeeef;"></div>
<div class="b" style="left:266.4px;top:1077.5px;width:319.2px;height:22.5px;background:#eeeeef;"></div>
<div class="b" style="left:587.0px;top:1077.5px;width:110.0px;height:22.5px;background:#eeeeef;"></div>
<div class="b" style="left:698.4px;top:1077.5px;width:109.6px;height:22.5px;background:#eeeeef;"></div>
<div class="b" style="left:810.0px;top:1077.5px;width:120.8px;height:22.5px;background:#eeeeef;"></div>
<div class="t" style="left:328.6px;width:600px;text-align:right;top:1082.3px;font-size:14.90px;line-height:14.90px;color:#15151c;"><span style="display:inline-block;transform:scaleX(1.0117);transform-origin:right center;">591,800.00</span></div>
<div class="b" style="left:135.0px;top:1102.0px;width:129.6px;height:22.5px;background:#fdfdfd;"></div>
<div class="b" style="left:266.4px;top:1102.0px;width:319.2px;height:22.5px;background:#fdfdfd;"></div>
<div class="b" style="left:587.0px;top:1102.0px;width:110.0px;height:22.5px;background:#fdfdfd;"></div>
<div class="b" style="left:698.4px;top:1102.0px;width:109.6px;height:22.5px;background:#fdfdfd;"></div>
<div class="b" style="left:810.0px;top:1102.0px;width:120.8px;height:22.5px;background:#fdfdfd;"></div>
<div class="t" style="left:328.6px;width:600px;text-align:right;top:1106.7px;font-size:14.90px;line-height:14.90px;color:#15151c;"><span style="display:inline-block;transform:scaleX(1.0117);transform-origin:right center;">591,800.00</span></div>
<div class="b" style="left:135.0px;top:1126.4px;width:129.6px;height:22.5px;background:#eeeeef;"></div>
<div class="b" style="left:266.4px;top:1126.4px;width:319.2px;height:22.5px;background:#eeeeef;"></div>
<div class="b" style="left:587.0px;top:1126.4px;width:110.0px;height:22.5px;background:#eeeeef;"></div>
<div class="b" style="left:698.4px;top:1126.4px;width:109.6px;height:22.5px;background:#eeeeef;"></div>
<div class="b" style="left:810.0px;top:1126.4px;width:120.8px;height:22.5px;background:#eeeeef;"></div>
<div class="t" style="left:328.6px;width:600px;text-align:right;top:1131.2px;font-size:14.90px;line-height:14.90px;color:#15151c;"><span style="display:inline-block;transform:scaleX(1.0117);transform-origin:right center;">591,800.00</span></div>
<div class="b" style="left:135.0px;top:1150.8px;width:129.6px;height:22.5px;background:#fdfdfd;"></div>
<div class="b" style="left:266.4px;top:1150.8px;width:319.2px;height:22.5px;background:#fdfdfd;"></div>
<div class="b" style="left:587.0px;top:1150.8px;width:110.0px;height:22.5px;background:#fdfdfd;"></div>
<div class="b" style="left:698.4px;top:1150.8px;width:109.6px;height:22.5px;background:#fdfdfd;"></div>
<div class="b" style="left:810.0px;top:1150.8px;width:120.8px;height:22.5px;background:#fdfdfd;"></div>
<div class="t" style="left:328.6px;width:600px;text-align:right;top:1155.6px;font-size:14.90px;line-height:14.90px;color:#15151c;"><span style="display:inline-block;transform:scaleX(1.0117);transform-origin:right center;">591,800.00</span></div>
<div class="b" style="left:135.0px;top:1175.3px;width:129.6px;height:22.5px;background:#eeeeef;"></div>
<div class="b" style="left:266.4px;top:1175.3px;width:319.2px;height:22.5px;background:#eeeeef;"></div>
<div class="b" style="left:587.0px;top:1175.3px;width:110.0px;height:22.5px;background:#eeeeef;"></div>
<div class="b" style="left:698.4px;top:1175.3px;width:109.6px;height:22.5px;background:#eeeeef;"></div>
<div class="b" style="left:810.0px;top:1175.3px;width:120.8px;height:22.5px;background:#eeeeef;"></div>
<div class="t" style="left:328.6px;width:600px;text-align:right;top:1180.1px;font-size:14.90px;line-height:14.90px;color:#15151c;"><span style="display:inline-block;transform:scaleX(1.0117);transform-origin:right center;">591,800.00</span></div>
<div class="b" style="left:135.0px;top:1199.8px;width:129.6px;height:22.5px;background:#fdfdfd;"></div>
<div class="b" style="left:266.4px;top:1199.8px;width:319.2px;height:22.5px;background:#fdfdfd;"></div>
<div class="b" style="left:587.0px;top:1199.8px;width:110.0px;height:22.5px;background:#fdfdfd;"></div>
<div class="b" style="left:698.4px;top:1199.8px;width:109.6px;height:22.5px;background:#fdfdfd;"></div>
<div class="b" style="left:810.0px;top:1199.8px;width:120.8px;height:22.5px;background:#fdfdfd;"></div>
<div class="t" style="left:328.6px;width:600px;text-align:right;top:1204.5px;font-size:14.90px;line-height:14.90px;color:#15151c;"><span style="display:inline-block;transform:scaleX(1.0117);transform-origin:right center;">591,800.00</span></div>
<div class="b" style="left:135.0px;top:1224.2px;width:129.6px;height:22.5px;background:#eeeeef;"></div>
<div class="b" style="left:266.4px;top:1224.2px;width:319.2px;height:22.5px;background:#eeeeef;"></div>
<div class="b" style="left:587.0px;top:1224.2px;width:110.0px;height:22.5px;background:#eeeeef;"></div>
<div class="b" style="left:698.4px;top:1224.2px;width:109.6px;height:22.5px;background:#eeeeef;"></div>
<div class="b" style="left:810.0px;top:1224.2px;width:120.8px;height:22.5px;background:#eeeeef;"></div>
<div class="t" style="left:328.6px;width:600px;text-align:right;top:1229.0px;font-size:14.90px;line-height:14.90px;color:#15151c;"><span style="display:inline-block;transform:scaleX(1.0117);transform-origin:right center;">591,800.00</span></div>
<div class="b" style="left:134.0px;top:1248.7px;width:800.0px;height:4.4px;background:#77767a;"></div>
</div></div>
<div class="b" style="left:100.5px;top:323.0px;width:204.0px;height:67.0px;background:rgba(150,150,152,.23);"></div>
<div class="b" style="left:299.0px;top:130.0px;width:5.5px;height:193.0px;background:rgba(150,150,152,.23);"></div>
<div class="b" style="left:101.6px;top:129.8px;width:197.2px;height:193.0px;background:transparent;border:2px solid #6d71f6;border-radius:3px;box-sizing:border-box;"></div>
<div class="b" style="left:342.4px;top:50.0px;width:1012.0px;height:945.0px;background:#ebebec;border-radius:7px 0 0 0;"></div>
<div class="b" style="left:342.4px;top:104.0px;width:1012.0px;height:6.0px;background:linear-gradient(180deg,rgba(0,0,0,0),rgba(0,0,0,.05));"></div>
<div id="pgsh"></div>
<div id="page">
<div class="b" style="left:145.2px;top:92.0px;width:93.8px;height:28.0px;background:#454548;"></div>
<div class="t" style="left:-107.9px;width:600px;text-align:center;top:99.7px;font-size:13.40px;line-height:13.40px;color:#ececf0;"><span style="display:inline-block;transform:scaleX(0.9778);transform-origin:center center;">Reset Form</span></div>
<div class="b" style="left:248.0px;top:92.0px;width:93.2px;height:28.0px;background:#454548;"></div>
<div class="t" style="left:-5.4px;width:600px;text-align:center;top:99.7px;font-size:13.40px;line-height:13.40px;color:#ececf0;"><span style="display:inline-block;transform:scaleX(0.9773);transform-origin:center center;">Save Form</span></div>
<div class="b" style="left:353.0px;top:92.0px;width:93.6px;height:28.0px;background:#454548;"></div>
<div class="t" style="left:99.8px;width:600px;text-align:center;top:99.7px;font-size:13.40px;line-height:13.40px;color:#ececf0;"><span style="display:inline-block;transform:scaleX(1.0320);transform-origin:center center;">Print Form</span></div>
<div class="b" style="left:141.4px;top:129.6px;width:124.6px;height:98.0px;background:#dde2fb;"></div>
<svg class="b" style="left:177.0px;top:133.0px" width="40" height="48" viewBox="545 243 40 48"><polygon fill="#c1303a" points="546.5,290 546.5,269.5 565.3,260.6 565.6,253.5 583.5,244.5 583.5,264 565.3,273 565.3,279 553,285.2 553,287 "/><polygon fill="#f4e9f2" points="566.2,256.7 583.5,248 583.5,251.4 566.2,260.3"/><polygon fill="#f4e9f2" points="554,274.4 565.3,268.9 565.3,272.6 554,278.2"/></svg>
<div class="t" style="left:-354.4px;width:600px;text-align:right;top:174.5px;font-size:16.30px;line-height:16.30px;font-family:'Liberation Serif', serif;font-weight:700;color:#111;-webkit-text-stroke:0.35px #111;"><span style="display:inline-block;transform:scaleX(0.9659);transform-origin:right center;"><span style="font-size:22.5px">F</span>IRST</span></div>
<div class="t" style="left:-354.4px;width:600px;text-align:right;top:191.1px;font-size:16.30px;line-height:16.30px;font-family:'Liberation Serif', serif;font-weight:700;color:#111;-webkit-text-stroke:0.35px #111;"><span style="display:inline-block;"><span style="font-size:22.5px">C</span>ITIZENS</span></div>
<div class="t" style="left:-354.4px;width:600px;text-align:right;top:208.9px;font-size:16.30px;line-height:16.30px;font-family:'Liberation Serif', serif;font-weight:700;color:#111;-webkit-text-stroke:0.35px #111;"><span style="display:inline-block;transform:scaleX(0.9570);transform-origin:right center;"><span style="font-size:22.5px">B</span>ANK</span></div>
<div class="b" style="left:272.0px;top:137.0px;width:242.0px;height:83.0px;background:#dde2fb;"></div>
<div class="t" style="left:277.0px;top:149.4px;font-size:14.90px;line-height:14.90px;color:#15151c;"><span style="display:inline-block;">231 Valley Farms Street Santa</span></div>
<div class="t" style="left:277.0px;top:171.8px;font-size:14.90px;line-height:14.90px;color:#15151c;"><span style="display:inline-block;transform:scaleX(1.0067);transform-origin:left center;">Monica, CA 90403</span></div>
<div class="t" style="left:277.0px;top:193.8px;font-size:14.90px;line-height:14.90px;color:#15151c;"><span style="display:inline-block;transform:scaleX(1.0363);transform-origin:left center;">firstcitizensbank@domain.com</span></div>
<div class="t" style="left:137.0px;top:252.8px;font-size:13.70px;line-height:13.70px;color:#15151c;"><span style="display:inline-block;transform:scaleX(1.0402);transform-origin:left center;">Account Number:</span></div>
<div class="t" style="left:137.0px;top:277.4px;font-size:13.70px;line-height:13.70px;color:#15151c;"><span style="display:inline-block;transform:scaleX(1.0311);transform-origin:left center;">Statement Date:</span></div>
<div class="t" style="left:137.0px;top:295.4px;font-size:13.70px;line-height:13.70px;color:#15151c;"><span style="display:inline-block;transform:scaleX(1.0058);transform-origin:left center;">Period Covered:</span></div>
<div class="b" style="left:272.0px;top:247.0px;width:242.0px;height:23.0px;background:#dde2fb;"></div>
<div class="b" style="left:272.0px;top:272.0px;width:242.0px;height:21.6px;background:#dde2fb;"></div>
<div class="b" style="left:272.0px;top:296.0px;width:242.0px;height:22.0px;background:#dde2fb;"></div>
<div class="t" style="left:277.0px;top:252.0px;font-size:14.90px;line-height:14.90px;color:#15151c;"><span style="display:inline-block;transform:scaleX(1.0397);transform-origin:left center;">111-234-567-890</span></div>
<div class="t" style="left:277.0px;top:276.4px;font-size:14.90px;line-height:14.90px;color:#15151c;"><span style="display:inline-block;transform:scaleX(1.0902);transform-origin:left center;">mm/dd/yyyy</span></div>
<div class="t" style="left:277.0px;top:301.0px;font-size:14.90px;line-height:14.90px;color:#15151c;"><span style="display:inline-block;transform:scaleX(1.0916);transform-origin:left center;">mm/dd/yyyy to mm/dd/yyyy</span></div>
<div class="b" style="left:702.0px;top:178.4px;width:93.6px;height:18.2px;background:#a99bb3;"></div>
<div class="b" style="left:795.6px;top:178.4px;width:106.4px;height:18.2px;background:#fbc8aa;"></div>
<div class="b" style="left:695.0px;top:171.6px;width:213.6px;height:32.0px;background:transparent;border:1px solid #7b7cf2;box-sizing:border-box;"></div>
<div class="b" style="left:794.9px;top:178.0px;width:1.4px;height:19.0px;background:#111;"></div>
<div class="t" style="left:703.6px;top:178.9px;font-size:15.90px;line-height:15.90px;font-weight:700;color:#0c0c10;"><span style="display:inline-block;transform:scaleX(0.9702);transform-origin:left center;">STATEMENT OF ACCOUNT</span></div>
<div class="b" style="left:691.0px;top:182.9px;width:9.0px;height:9.0px;background:#7479f5;border-radius:50%;"></div>
<div class="b" style="left:903.5px;top:182.9px;width:9.0px;height:9.0px;background:#7479f5;border-radius:50%;"></div>
<div class="b" style="left:871.0px;top:271.4px;width:24.6px;height:22.2px;background:#dde2fb;"></div>
<div class="b" style="left:912.0px;top:271.4px;width:25.6px;height:22.2px;background:#dde2fb;"></div>
<div class="t" style="left:840.6px;top:277.4px;font-size:13.70px;line-height:13.70px;color:#15151c;"><span style="display:inline-block;transform:scaleX(0.9196);transform-origin:left center;">Page</span></div>
<div class="t" style="left:898.0px;top:277.4px;font-size:13.70px;line-height:13.70px;color:#15151c;"><span style="display:inline-block;transform:scaleX(1.1031);transform-origin:left center;">of</span></div>
<div class="t" style="left:584.4px;width:600px;text-align:center;top:276.4px;font-size:14.90px;line-height:14.90px;color:#15151c;"><span style="display:inline-block;transform:scaleX(1.0500);transform-origin:center center;">1</span></div>
<div class="t" style="left:626.2px;width:600px;text-align:center;top:276.4px;font-size:14.90px;line-height:14.90px;color:#15151c;"><span style="display:inline-block;transform:scaleX(1.0500);transform-origin:center center;">1</span></div>
<div class="b" style="left:139.0px;top:343.4px;width:376.0px;height:22.2px;background:#dde2fb;"></div>
<div class="b" style="left:139.0px;top:368.0px;width:376.0px;height:22.0px;background:#dde2fb;"></div>
<div class="b" style="left:139.0px;top:392.4px;width:376.0px;height:22.0px;background:#dde2fb;"></div>
<div class="b" style="left:139.0px;top:441.0px;width:376.0px;height:22.6px;background:#dde2fb;"></div>
<div class="t" style="left:143.0px;top:347.1px;font-size:17.60px;line-height:17.60px;color:#15151c;"><span style="display:inline-block;transform:scaleX(1.0066);transform-origin:left center;">John Smith</span></div>
<div class="t" style="left:143.0px;top:372.4px;font-size:14.90px;line-height:14.90px;color:#15151c;"><span style="display:inline-block;transform:scaleX(0.9597);transform-origin:left center;">2450 Courage St, STE 108</span></div>
<div class="t" style="left:143.0px;top:397.0px;font-size:14.90px;line-height:14.90px;color:#15151c;"><span style="display:inline-block;">Brownsville, TX 78521</span></div>
<div class="t" style="left:143.0px;top:445.8px;font-size:14.90px;line-height:14.90px;color:#15151c;"><span style="display:inline-block;transform:scaleX(0.9923);transform-origin:left center;">&lt;Branch Name&gt;</span></div>
<div class="b" style="left:817.0px;top:333.0px;width:121.0px;height:22.4px;background:#dde2fb;"></div>
<div class="t" style="left:208.0px;width:600px;text-align:right;top:338.8px;font-size:13.70px;line-height:13.70px;color:#15151c;"><span style="display:inline-block;">Opening Balance:</span></div>
<div class="t" style="left:336.0px;width:600px;text-align:right;top:337.8px;font-size:14.90px;line-height:14.90px;color:#15151c;"><span style="display:inline-block;transform:scaleX(1.0197);transform-origin:right center;">175,800.00</span></div>
<div class="b" style="left:817.0px;top:357.6px;width:121.0px;height:22.4px;background:#dde2fb;"></div>
<div class="t" style="left:208.0px;width:600px;text-align:right;top:363.2px;font-size:13.70px;line-height:13.70px;color:#15151c;"><span style="display:inline-block;transform:scaleX(1.0629);transform-origin:right center;">Total Credit Amount:</span></div>
<div class="t" style="left:336.0px;width:600px;text-align:right;top:362.2px;font-size:14.90px;line-height:14.90px;color:#15151c;"><span style="display:inline-block;transform:scaleX(1.0197);transform-origin:right center;">510,000.00</span></div>
<div class="b" style="left:817.0px;top:382.0px;width:121.0px;height:22.4px;background:#dde2fb;"></div>
<div class="t" style="left:208.0px;width:600px;text-align:right;top:387.4px;font-size:13.70px;line-height:13.70px;color:#15151c;"><span style="display:inline-block;transform:scaleX(1.0699);transform-origin:right center;">Total Debit Amount:</span></div>
<div class="t" style="left:336.0px;width:600px;text-align:right;top:386.4px;font-size:14.90px;line-height:14.90px;color:#15151c;"><span style="display:inline-block;transform:scaleX(1.0204);transform-origin:right center;">94,000.00</span></div>
<div class="b" style="left:817.0px;top:406.4px;width:121.0px;height:22.4px;background:#dde2fb;"></div>
<div class="t" style="left:208.0px;width:600px;text-align:right;top:412.0px;font-size:13.70px;line-height:13.70px;color:#15151c;"><span style="display:inline-block;transform:scaleX(0.9794);transform-origin:right center;">Closing Balance:</span></div>
<div class="t" style="left:336.0px;width:600px;text-align:right;top:411.0px;font-size:14.90px;line-height:14.90px;color:#15151c;"><span style="display:inline-block;transform:scaleX(1.0197);transform-origin:right center;">591,800.00</span></div>
<div class="b" style="left:817.0px;top:431.0px;width:121.0px;height:22.4px;background:#dde2fb;"></div>
<div class="t" style="left:208.0px;width:600px;text-align:right;top:436.2px;font-size:13.70px;line-height:13.70px;color:#15151c;"><span style="display:inline-block;transform:scaleX(1.0220);transform-origin:right center;">Account Type:</span></div>
<div class="t" style="left:821.6px;top:435.2px;font-size:14.90px;line-height:14.90px;color:#15151c;"><span style="display:inline-block;transform:scaleX(1.0395);transform-origin:left center;">Current Account</span></div>
<div class="b" style="left:817.0px;top:455.4px;width:121.0px;height:22.4px;background:#dde2fb;"></div>
<div class="t" style="left:208.0px;width:600px;text-align:right;top:460.4px;font-size:13.70px;line-height:13.70px;color:#15151c;"><span style="display:inline-block;transform:scaleX(1.0301);transform-origin:right center;">Number of Transactions:</span></div>
<div class="t" style="left:578.4px;width:600px;text-align:center;top:459.4px;font-size:14.90px;line-height:14.90px;color:#15151c;"><span style="display:inline-block;transform:scaleX(1.0500);transform-origin:center center;">8</span></div>
<div class="t" style="left:137.4px;top:496.4px;font-size:15.60px;line-height:15.60px;color:#15151c;"><span style="display:inline-block;transform:scaleX(1.0597);transform-origin:left center;">Transactions</span></div>
<div class="b" style="left:134.0px;top:513.8px;width:800.0px;height:4.4px;background:#77767a;"></div>
<div class="b" style="left:759.0px;top:502.0px;width:1.0px;height:7.0px;background:#b5b5b5;"></div>
<div class="t" style="left:-99.8px;width:600px;text-align:center;top:521.7px;font-size:13.40px;line-height:13.40px;font-weight:700;color:#0c0c10;"><span style="display:inline-block;transform:scaleX(1.0196);transform-origin:center center;">Date</span></div>
<div class="t" style="left:127.4px;width:600px;text-align:center;top:521.7px;font-size:13.40px;line-height:13.40px;font-weight:700;color:#0c0c10;"><span style="display:inline-block;transform:scaleX(0.9719);transform-origin:center center;">Description</span></div>
<div class="t" style="left:345.4px;width:600px;text-align:center;top:521.7px;font-size:13.40px;line-height:13.40px;font-weight:700;color:#0c0c10;"><span style="display:inline-block;transform:scaleX(0.9818);transform-origin:center center;">Credit</span></div>
<div class="t" style="left:456.6px;width:600px;text-align:center;top:521.7px;font-size:13.40px;line-height:13.40px;font-weight:700;color:#0c0c10;"><span style="display:inline-block;transform:scaleX(1.0154);transform-origin:center center;">Debit</span></div>
<div class="t" style="left:573.7px;width:600px;text-align:center;top:521.7px;font-size:13.40px;line-height:13.40px;font-weight:700;color:#0c0c10;"><span style="display:inline-block;transform:scaleX(0.9618);transform-origin:center center;">Balance</span></div>
<div class="b" style="left:135.0px;top:539.6px;width:129.6px;height:22.5px;background:#cfd5f0;"></div>
<div class="b" style="left:266.4px;top:539.6px;width:319.2px;height:22.5px;background:#cfd5f0;"></div>
<div class="b" style="left:587.0px;top:539.6px;width:110.0px;height:22.5px;background:#cfd5f0;"></div>
<div class="b" style="left:698.4px;top:539.6px;width:109.6px;height:22.5px;background:#cfd5f0;"></div>
<div class="b" style="left:810.0px;top:539.6px;width:120.8px;height:22.5px;background:#cfd5f0;"></div>
<div class="t" style="left:-99.7px;width:600px;text-align:center;top:544.4px;font-size:14.90px;line-height:14.90px;color:#15151c;"><span style="display:inline-block;transform:scaleX(1.0902);transform-origin:center center;">mm/dd/yyyy</span></div>
<div class="t" style="left:270.2px;top:544.4px;font-size:14.90px;line-height:14.90px;color:#15151c;"><span style="display:inline-block;">Payment - Credit Card</span></div>
<div class="t" style="left:206.2px;width:600px;text-align:right;top:544.4px;font-size:14.90px;line-height:14.90px;color:#15151c;"><span style="display:inline-block;transform:scaleX(1.0074);transform-origin:right center;">5,400.00</span></div>
<div class="t" style="left:328.6px;width:600px;text-align:right;top:544.4px;font-size:14.90px;line-height:14.90px;color:#15151c;"><span style="display:inline-block;transform:scaleX(1.0117);transform-origin:right center;">170,400.00</span></div>
<div class="b" style="left:135.0px;top:564.1px;width:129.6px;height:22.5px;background:#dde3fb;"></div>
<div class="b" style="left:266.4px;top:564.1px;width:319.2px;height:22.5px;background:#dde3fb;"></div>
<div class="b" style="left:587.0px;top:564.1px;width:110.0px;height:22.5px;background:#dde3fb;"></div>
<div class="b" style="left:698.4px;top:564.1px;width:109.6px;height:22.5px;background:#dde3fb;"></div>
<div class="b" style="left:810.0px;top:564.1px;width:120.8px;height:22.5px;background:#dde3fb;"></div>
<div class="t" style="left:-99.7px;width:600px;text-align:center;top:568.8px;font-size:14.90px;line-height:14.90px;color:#15151c;"><span style="display:inline-block;transform:scaleX(1.0902);transform-origin:center center;">mm/dd/yyyy</span></div>
<div class="t" style="left:270.2px;top:568.8px;font-size:14.90px;line-height:14.90px;color:#15151c;"><span style="display:inline-block;transform:scaleX(1.0073);transform-origin:left center;">Payment - Insurance</span></div>
<div class="t" style="left:206.2px;width:600px;text-align:right;top:568.8px;font-size:14.90px;line-height:14.90px;color:#15151c;"><span style="display:inline-block;transform:scaleX(1.0074);transform-origin:right center;">3,000.00</span></div>
<div class="t" style="left:328.6px;width:600px;text-align:right;top:568.8px;font-size:14.90px;line-height:14.90px;color:#15151c;"><span style="display:inline-block;transform:scaleX(1.0117);transform-origin:right center;">167,400.00</span></div>
<div class="b" style="left:135.0px;top:588.5px;width:129.6px;height:22.5px;background:#cfd5f0;"></div>
<div class="b" style="left:266.4px;top:588.5px;width:319.2px;height:22.5px;background:#cfd5f0;"></div>
<div class="b" style="left:587.0px;top:588.5px;width:110.0px;height:22.5px;background:#cfd5f0;"></div>
<div class="b" style="left:698.4px;top:588.5px;width:109.6px;height:22.5px;background:#cfd5f0;"></div>
<div class="b" style="left:810.0px;top:588.5px;width:120.8px;height:22.5px;background:#cfd5f0;"></div>
<div class="t" style="left:-99.7px;width:600px;text-align:center;top:593.3px;font-size:14.90px;line-height:14.90px;color:#15151c;"><span style="display:inline-block;transform:scaleX(1.0902);transform-origin:center center;">mm/dd/yyyy</span></div>
<div class="t" style="left:270.2px;top:593.3px;font-size:14.90px;line-height:14.90px;color:#15151c;"><span style="display:inline-block;transform:scaleX(1.0192);transform-origin:left center;">Account Transfer In</span></div>
<div class="t" style="left:94.6px;width:600px;text-align:right;top:593.3px;font-size:14.90px;line-height:14.90px;color:#15151c;"><span style="display:inline-block;transform:scaleX(1.0117);transform-origin:right center;">500,000.00</span></div>
<div class="t" style="left:328.6px;width:600px;text-align:right;top:593.3px;font-size:14.90px;line-height:14.90px;color:#15151c;"><span style="display:inline-block;transform:scaleX(1.0117);transform-origin:right center;">667,400.00</span></div>
<div class="b" style="left:135.0px;top:613.0px;width:129.6px;height:22.5px;background:#dde3fb;"></div>
<div class="b" style="left:266.4px;top:613.0px;width:319.2px;height:22.5px;background:#dde3fb;"></div>
<div class="b" style="left:587.0px;top:613.0px;width:110.0px;height:22.5px;background:#dde3fb;"></div>
<div class="b" style="left:698.4px;top:613.0px;width:109.6px;height:22.5px;background:#dde3fb;"></div>
<div class="b" style="left:810.0px;top:613.0px;width:120.8px;height:22.5px;background:#dde3fb;"></div>
<div class="t" style="left:-99.7px;width:600px;text-align:center;top:617.7px;font-size:14.90px;line-height:14.90px;color:#15151c;"><span style="display:inline-block;transform:scaleX(1.0902);transform-origin:center center;">mm/dd/yyyy</span></div>
<div class="t" style="left:270.2px;top:617.7px;font-size:14.90px;line-height:14.90px;color:#15151c;"><span style="display:inline-block;">Cheque Deposit</span></div>
<div class="t" style="left:94.6px;width:600px;text-align:right;top:617.7px;font-size:14.90px;line-height:14.90px;color:#15151c;"><span style="display:inline-block;transform:scaleX(1.0174);transform-origin:right center;">10,000.00</span></div>
<div class="t" style="left:328.6px;width:600px;text-align:right;top:617.7px;font-size:14.90px;line-height:14.90px;color:#15151c;"><span style="display:inline-block;transform:scaleX(1.0117);transform-origin:right center;">677,400.00</span></div>
<div class="b" style="left:135.0px;top:637.4px;width:129.6px;height:22.5px;background:#cfd5f0;"></div>
<div class="b" style="left:266.4px;top:637.4px;width:319.2px;height:22.5px;background:#cfd5f0;"></div>
<div class="b" style="left:587.0px;top:637.4px;width:110.0px;height:22.5px;background:#cfd5f0;"></div>
<div class="b" style="left:698.4px;top:637.4px;width:109.6px;height:22.5px;background:#cfd5f0;"></div>
<div class="b" style="left:810.0px;top:637.4px;width:120.8px;height:22.5px;background:#cfd5f0;"></div>
<div class="t" style="left:-99.7px;width:600px;text-align:center;top:642.2px;font-size:14.90px;line-height:14.90px;color:#15151c;"><span style="display:inline-block;transform:scaleX(1.0902);transform-origin:center center;">mm/dd/yyyy</span></div>
<div class="t" style="left:270.2px;top:642.2px;font-size:14.90px;line-height:14.90px;color:#15151c;"><span style="display:inline-block;transform:scaleX(1.0213);transform-origin:left center;">Payment - Electricity</span></div>
<div class="t" style="left:206.2px;width:600px;text-align:right;top:642.2px;font-size:14.90px;line-height:14.90px;color:#15151c;"><span style="display:inline-block;transform:scaleX(1.0074);transform-origin:right center;">1,500.00</span></div>
<div class="t" style="left:328.6px;width:600px;text-align:right;top:642.2px;font-size:14.90px;line-height:14.90px;color:#15151c;"><span style="display:inline-block;transform:scaleX(1.0117);transform-origin:right center;">675,900.00</span></div>
<div class="b" style="left:135.0px;top:661.9px;width:129.6px;height:22.5px;background:#dde3fb;"></div>
<div class="b" style="left:266.4px;top:661.9px;width:319.2px;height:22.5px;background:#dde3fb;"></div>
<div class="b" style="left:587.0px;top:661.9px;width:110.0px;height:22.5px;background:#dde3fb;"></div>
<div class="b" style="left:698.4px;top:661.9px;width:109.6px;height:22.5px;background:#dde3fb;"></div>
<div class="b" style="left:810.0px;top:661.9px;width:120.8px;height:22.5px;background:#dde3fb;"></div>
<div class="t" style="left:-99.7px;width:600px;text-align:center;top:666.6px;font-size:14.90px;line-height:14.90px;color:#15151c;"><span style="display:inline-block;transform:scaleX(1.0902);transform-origin:center center;">mm/dd/yyyy</span></div>
<div class="t" style="left:270.2px;top:666.6px;font-size:14.90px;line-height:14.90px;color:#15151c;"><span style="display:inline-block;transform:scaleX(1.0507);transform-origin:left center;">Payment - Water Utility</span></div>
<div class="t" style="left:206.2px;width:600px;text-align:right;top:666.6px;font-size:14.90px;line-height:14.90px;color:#15151c;"><span style="display:inline-block;transform:scaleX(1.0099);transform-origin:right center;">600.00</span></div>
<div class="t" style="left:328.6px;width:600px;text-align:right;top:666.6px;font-size:14.90px;line-height:14.90px;color:#15151c;"><span style="display:inline-block;transform:scaleX(1.0117);transform-origin:right center;">675,300.00</span></div>
<div class="b" style="left:135.0px;top:686.3px;width:129.6px;height:22.5px;background:#cfd5f0;"></div>
<div class="b" style="left:266.4px;top:686.3px;width:319.2px;height:22.5px;background:#cfd5f0;"></div>
<div class="b" style="left:587.0px;top:686.3px;width:110.0px;height:22.5px;background:#cfd5f0;"></div>
<div class="b" style="left:698.4px;top:686.3px;width:109.6px;height:22.5px;background:#cfd5f0;"></div>
<div class="b" style="left:810.0px;top:686.3px;width:120.8px;height:22.5px;background:#cfd5f0;"></div>
<div class="t" style="left:-99.7px;width:600px;text-align:center;top:691.1px;font-size:14.90px;line-height:14.90px;color:#15151c;"><span style="display:inline-block;transform:scaleX(1.0902);transform-origin:center center;">mm/dd/yyyy</span></div>
<div class="t" style="left:270.2px;top:691.1px;font-size:14.90px;line-height:14.90px;color:#15151c;"><span style="display:inline-block;transform:scaleX(0.9785);transform-origin:left center;">Payment - Car Loan</span></div>
<div class="t" style="left:206.2px;width:600px;text-align:right;top:691.1px;font-size:14.90px;line-height:14.90px;color:#15151c;"><span style="display:inline-block;transform:scaleX(1.0074);transform-origin:right center;">3,500.00</span></div>
<div class="t" style="left:328.6px;width:600px;text-align:right;top:691.1px;font-size:14.90px;line-height:14.90px;color:#15151c;"><span style="display:inline-block;transform:scaleX(1.0117);transform-origin:right center;">671,800.00</span></div>
<div class="b" style="left:135.0px;top:710.8px;width:129.6px;height:22.5px;background:#dde3fb;"></div>
<div class="b" style="left:266.4px;top:710.8px;width:319.2px;height:22.5px;background:#dde3fb;"></div>
<div class="b" style="left:587.0px;top:710.8px;width:110.0px;height:22.5px;background:#dde3fb;"></div>
<div class="b" style="left:698.4px;top:710.8px;width:109.6px;height:22.5px;background:#dde3fb;"></div>
<div class="b" style="left:810.0px;top:710.8px;width:120.8px;height:22.5px;background:#dde3fb;"></div>
<div class="t" style="left:-99.7px;width:600px;text-align:center;top:715.5px;font-size:14.90px;line-height:14.90px;color:#15151c;"><span style="display:inline-block;transform:scaleX(1.0902);transform-origin:center center;">mm/dd/yyyy</span></div>
<div class="t" style="left:270.2px;top:715.5px;font-size:14.90px;line-height:14.90px;color:#15151c;"><span style="display:inline-block;transform:scaleX(1.0277);transform-origin:left center;">Account Transfer Out</span></div>
<div class="t" style="left:206.2px;width:600px;text-align:right;top:715.5px;font-size:14.90px;line-height:14.90px;color:#15151c;"><span style="display:inline-block;transform:scaleX(1.0174);transform-origin:right center;">80,000.00</span></div>
<div class="t" style="left:328.6px;width:600px;text-align:right;top:715.5px;font-size:14.90px;line-height:14.90px;color:#15151c;"><span style="display:inline-block;transform:scaleX(1.0117);transform-origin:right center;">591,800.00</span></div>
<div class="b" style="left:135.0px;top:735.2px;width:129.6px;height:22.5px;background:#cfd5f0;"></div>
<div class="b" style="left:266.4px;top:735.2px;width:319.2px;height:22.5px;background:#cfd5f0;"></div>
<div class="b" style="left:587.0px;top:735.2px;width:110.0px;height:22.5px;background:#cfd5f0;"></div>
<div class="b" style="left:698.4px;top:735.2px;width:109.6px;height:22.5px;background:#cfd5f0;"></div>
<div class="b" style="left:810.0px;top:735.2px;width:120.8px;height:22.5px;background:#cfd5f0;"></div>
<div class="t" style="left:270.2px;top:740.0px;font-size:14.90px;line-height:14.90px;color:#15151c;"><span style="display:inline-block;transform:scaleX(1.0043);transform-origin:left center;">--- End of Transactions --</span></div>
<div class="t" style="left:328.6px;width:600px;text-align:right;top:740.0px;font-size:14.90px;line-height:14.90px;color:#15151c;"><span style="display:inline-block;transform:scaleX(1.0117);transform-origin:right center;">591,800.00</span></div>
<div class="b" style="left:135.0px;top:759.6px;width:129.6px;height:22.5px;background:#dde3fb;"></div>
<div class="b" style="left:266.4px;top:759.6px;width:319.2px;height:22.5px;background:#dde3fb;"></div>
<div class="b" style="left:587.0px;top:759.6px;width:110.0px;height:22.5px;background:#dde3fb;"></div>
<div class="b" style="left:698.4px;top:759.6px;width:109.6px;height:22.5px;background:#dde3fb;"></div>
<div class="b" style="left:810.0px;top:759.6px;width:120.8px;height:22.5px;background:#dde3fb;"></div>
<div class="t" style="left:328.6px;width:600px;text-align:right;top:764.4px;font-size:14.90px;line-height:14.90px;color:#15151c;"><span style="display:inline-block;transform:scaleX(1.0117);transform-origin:right center;">591,800.00</span></div>
<div class="b" style="left:135.0px;top:784.1px;width:129.6px;height:22.5px;background:#cfd5f0;"></div>
<div class="b" style="left:266.4px;top:784.1px;width:319.2px;height:22.5px;background:#cfd5f0;"></div>
<div class="b" style="left:587.0px;top:784.1px;width:110.0px;height:22.5px;background:#cfd5f0;"></div>
<div class="b" style="left:698.4px;top:784.1px;width:109.6px;height:22.5px;background:#cfd5f0;"></div>
<div class="b" style="left:810.0px;top:784.1px;width:120.8px;height:22.5px;background:#cfd5f0;"></div>
<div class="t" style="left:328.6px;width:600px;text-align:right;top:788.9px;font-size:14.90px;line-height:14.90px;color:#15151c;"><span style="display:inline-block;transform:scaleX(1.0117);transform-origin:right center;">591,800.00</span></div>
<div class="b" style="left:135.0px;top:808.5px;width:129.6px;height:22.5px;background:#dde3fb;"></div>
<div class="b" style="left:266.4px;top:808.5px;width:319.2px;height:22.5px;background:#dde3fb;"></div>
<div class="b" style="left:587.0px;top:808.5px;width:110.0px;height:22.5px;background:#dde3fb;"></div>
<div class="b" style="left:698.4px;top:808.5px;width:109.6px;height:22.5px;background:#dde3fb;"></div>
<div class="b" style="left:810.0px;top:808.5px;width:120.8px;height:22.5px;background:#dde3fb;"></div>
<div class="t" style="left:328.6px;width:600px;text-align:right;top:813.3px;font-size:14.90px;line-height:14.90px;color:#15151c;"><span style="display:inline-block;transform:scaleX(1.0117);transform-origin:right center;">591,800.00</span></div>
<div class="b" style="left:135.0px;top:833.0px;width:129.6px;height:22.5px;background:#cfd5f0;"></div>
<div class="b" style="left:266.4px;top:833.0px;width:319.2px;height:22.5px;background:#cfd5f0;"></div>
<div class="b" style="left:587.0px;top:833.0px;width:110.0px;height:22.5px;background:#cfd5f0;"></div>
<div class="b" style="left:698.4px;top:833.0px;width:109.6px;height:22.5px;background:#cfd5f0;"></div>
<div class="b" style="left:810.0px;top:833.0px;width:120.8px;height:22.5px;background:#cfd5f0;"></div>
<div class="t" style="left:328.6px;width:600px;text-align:right;top:837.8px;font-size:14.90px;line-height:14.90px;color:#15151c;"><span style="display:inline-block;transform:scaleX(1.0117);transform-origin:right center;">591,800.00</span></div>
<div class="b" style="left:135.0px;top:857.5px;width:129.6px;height:22.5px;background:#dde3fb;"></div>
<div class="b" style="left:266.4px;top:857.5px;width:319.2px;height:22.5px;background:#dde3fb;"></div>
<div class="b" style="left:587.0px;top:857.5px;width:110.0px;height:22.5px;background:#dde3fb;"></div>
<div class="b" style="left:698.4px;top:857.5px;width:109.6px;height:22.5px;background:#dde3fb;"></div>
<div class="b" style="left:810.0px;top:857.5px;width:120.8px;height:22.5px;background:#dde3fb;"></div>
<div class="t" style="left:328.6px;width:600px;text-align:right;top:862.2px;font-size:14.90px;line-height:14.90px;color:#15151c;"><span style="display:inline-block;transform:scaleX(1.0117);transform-origin:right center;">591,800.00</span></div>
<div class="b" style="left:135.0px;top:881.9px;width:129.6px;height:22.5px;background:#cfd5f0;"></div>
<div class="b" style="left:266.4px;top:881.9px;width:319.2px;height:22.5px;background:#cfd5f0;"></div>
<div class="b" style="left:587.0px;top:881.9px;width:110.0px;height:22.5px;background:#cfd5f0;"></div>
<div class="b" style="left:698.4px;top:881.9px;width:109.6px;height:22.5px;background:#cfd5f0;"></div>
<div class="b" style="left:810.0px;top:881.9px;width:120.8px;height:22.5px;background:#cfd5f0;"></div>
<div class="t" style="left:328.6px;width:600px;text-align:right;top:886.7px;font-size:14.90px;line-height:14.90px;color:#15151c;"><span style="display:inline-block;transform:scaleX(1.0117);transform-origin:right center;">591,800.00</span></div>
<div class="b" style="left:135.0px;top:906.4px;width:129.6px;height:22.5px;background:#dde3fb;"></div>
<div class="b" style="left:266.4px;top:906.4px;width:319.2px;height:22.5px;background:#dde3fb;"></div>
<div class="b" style="left:587.0px;top:906.4px;width:110.0px;height:22.5px;background:#dde3fb;"></div>
<div class="b" style="left:698.4px;top:906.4px;width:109.6px;height:22.5px;background:#dde3fb;"></div>
<div class="b" style="left:810.0px;top:906.4px;width:120.8px;height:22.5px;background:#dde3fb;"></div>
<div class="t" style="left:328.6px;width:600px;text-align:right;top:911.1px;font-size:14.90px;line-height:14.90px;color:#15151c;"><span style="display:inline-block;transform:scaleX(1.0117);transform-origin:right center;">591,800.00</span></div>
<div class="b" style="left:135.0px;top:930.8px;width:129.6px;height:22.5px;background:#cfd5f0;"></div>
<div class="b" style="left:266.4px;top:930.8px;width:319.2px;height:22.5px;background:#cfd5f0;"></div>
<div class="b" style="left:587.0px;top:930.8px;width:110.0px;height:22.5px;background:#cfd5f0;"></div>
<div class="b" style="left:698.4px;top:930.8px;width:109.6px;height:22.5px;background:#cfd5f0;"></div>
<div class="b" style="left:810.0px;top:930.8px;width:120.8px;height:22.5px;background:#cfd5f0;"></div>
<div class="t" style="left:328.6px;width:600px;text-align:right;top:935.6px;font-size:14.90px;line-height:14.90px;color:#15151c;"><span style="display:inline-block;transform:scaleX(1.0117);transform-origin:right center;">591,800.00</span></div>
<div class="b" style="left:135.0px;top:955.2px;width:129.6px;height:22.5px;background:#dde3fb;"></div>
<div class="b" style="left:266.4px;top:955.2px;width:319.2px;height:22.5px;background:#dde3fb;"></div>
<div class="b" style="left:587.0px;top:955.2px;width:110.0px;height:22.5px;background:#dde3fb;"></div>
<div class="b" style="left:698.4px;top:955.2px;width:109.6px;height:22.5px;background:#dde3fb;"></div>
<div class="b" style="left:810.0px;top:955.2px;width:120.8px;height:22.5px;background:#dde3fb;"></div>
<div class="t" style="left:328.6px;width:600px;text-align:right;top:960.0px;font-size:14.90px;line-height:14.90px;color:#15151c;"><span style="display:inline-block;transform:scaleX(1.0117);transform-origin:right center;">591,800.00</span></div>
<div class="b" style="left:135.0px;top:979.7px;width:129.6px;height:22.5px;background:#cfd5f0;"></div>
<div class="b" style="left:266.4px;top:979.7px;width:319.2px;height:22.5px;background:#cfd5f0;"></div>
<div class="b" style="left:587.0px;top:979.7px;width:110.0px;height:22.5px;background:#cfd5f0;"></div>
<div class="b" style="left:698.4px;top:979.7px;width:109.6px;height:22.5px;background:#cfd5f0;"></div>
<div class="b" style="left:810.0px;top:979.7px;width:120.8px;height:22.5px;background:#cfd5f0;"></div>
<div class="t" style="left:328.6px;width:600px;text-align:right;top:984.5px;font-size:14.90px;line-height:14.90px;color:#15151c;"><span style="display:inline-block;transform:scaleX(1.0117);transform-origin:right center;">591,800.00</span></div>
<div class="b" style="left:135.0px;top:1004.2px;width:129.6px;height:22.5px;background:#dde3fb;"></div>
<div class="b" style="left:266.4px;top:1004.2px;width:319.2px;height:22.5px;background:#dde3fb;"></div>
<div class="b" style="left:587.0px;top:1004.2px;width:110.0px;height:22.5px;background:#dde3fb;"></div>
<div class="b" style="left:698.4px;top:1004.2px;width:109.6px;height:22.5px;background:#dde3fb;"></div>
<div class="b" style="left:810.0px;top:1004.2px;width:120.8px;height:22.5px;background:#dde3fb;"></div>
<div class="t" style="left:328.6px;width:600px;text-align:right;top:1008.9px;font-size:14.90px;line-height:14.90px;color:#15151c;"><span style="display:inline-block;transform:scaleX(1.0117);transform-origin:right center;">591,800.00</span></div>
<div class="b" style="left:135.0px;top:1028.6px;width:129.6px;height:22.5px;background:#cfd5f0;"></div>
<div class="b" style="left:266.4px;top:1028.6px;width:319.2px;height:22.5px;background:#cfd5f0;"></div>
<div class="b" style="left:587.0px;top:1028.6px;width:110.0px;height:22.5px;background:#cfd5f0;"></div>
<div class="b" style="left:698.4px;top:1028.6px;width:109.6px;height:22.5px;background:#cfd5f0;"></div>
<div class="b" style="left:810.0px;top:1028.6px;width:120.8px;height:22.5px;background:#cfd5f0;"></div>
<div class="t" style="left:328.6px;width:600px;text-align:right;top:1033.4px;font-size:14.90px;line-height:14.90px;color:#15151c;"><span style="display:inline-block;transform:scaleX(1.0117);transform-origin:right center;">591,800.00</span></div>
<div class="b" style="left:135.0px;top:1053.0px;width:129.6px;height:22.5px;background:#dde3fb;"></div>
<div class="b" style="left:266.4px;top:1053.0px;width:319.2px;height:22.5px;background:#dde3fb;"></div>
<div class="b" style="left:587.0px;top:1053.0px;width:110.0px;height:22.5px;background:#dde3fb;"></div>
<div class="b" style="left:698.4px;top:1053.0px;width:109.6px;height:22.5px;background:#dde3fb;"></div>
<div class="b" style="left:810.0px;top:1053.0px;width:120.8px;height:22.5px;background:#dde3fb;"></div>
<div class="t" style="left:328.6px;width:600px;text-align:right;top:1057.8px;font-size:14.90px;line-height:14.90px;color:#15151c;"><span style="display:inline-block;transform:scaleX(1.0117);transform-origin:right center;">591,800.00</span></div>
<div class="b" style="left:135.0px;top:1077.5px;width:129.6px;height:22.5px;background:#cfd5f0;"></div>
<div class="b" style="left:266.4px;top:1077.5px;width:319.2px;height:22.5px;background:#cfd5f0;"></div>
<div class="b" style="left:587.0px;top:1077.5px;width:110.0px;height:22.5px;background:#cfd5f0;"></div>
<div class="b" style="left:698.4px;top:1077.5px;width:109.6px;height:22.5px;background:#cfd5f0;"></div>
<div class="b" style="left:810.0px;top:1077.5px;width:120.8px;height:22.5px;background:#cfd5f0;"></div>
<div class="t" style="left:328.6px;width:600px;text-align:right;top:1082.3px;font-size:14.90px;line-height:14.90px;color:#15151c;"><span style="display:inline-block;transform:scaleX(1.0117);transform-origin:right center;">591,800.00</span></div>
<div class="b" style="left:135.0px;top:1102.0px;width:129.6px;height:22.5px;background:#dde3fb;"></div>
<div class="b" style="left:266.4px;top:1102.0px;width:319.2px;height:22.5px;background:#dde3fb;"></div>
<div class="b" style="left:587.0px;top:1102.0px;width:110.0px;height:22.5px;background:#dde3fb;"></div>
<div class="b" style="left:698.4px;top:1102.0px;width:109.6px;height:22.5px;background:#dde3fb;"></div>
<div class="b" style="left:810.0px;top:1102.0px;width:120.8px;height:22.5px;background:#dde3fb;"></div>
<div class="t" style="left:328.6px;width:600px;text-align:right;top:1106.7px;font-size:14.90px;line-height:14.90px;color:#15151c;"><span style="display:inline-block;transform:scaleX(1.0117);transform-origin:right center;">591,800.00</span></div>
<div class="b" style="left:135.0px;top:1126.4px;width:129.6px;height:22.5px;background:#cfd5f0;"></div>
<div class="b" style="left:266.4px;top:1126.4px;width:319.2px;height:22.5px;background:#cfd5f0;"></div>
<div class="b" style="left:587.0px;top:1126.4px;width:110.0px;height:22.5px;background:#cfd5f0;"></div>
<div class="b" style="left:698.4px;top:1126.4px;width:109.6px;height:22.5px;background:#cfd5f0;"></div>
<div class="b" style="left:810.0px;top:1126.4px;width:120.8px;height:22.5px;background:#cfd5f0;"></div>
<div class="t" style="left:328.6px;width:600px;text-align:right;top:1131.2px;font-size:14.90px;line-height:14.90px;color:#15151c;"><span style="display:inline-block;transform:scaleX(1.0117);transform-origin:right center;">591,800.00</span></div>
<div class="b" style="left:135.0px;top:1150.8px;width:129.6px;height:22.5px;background:#dde3fb;"></div>
<div class="b" style="left:266.4px;top:1150.8px;width:319.2px;height:22.5px;background:#dde3fb;"></div>
<div class="b" style="left:587.0px;top:1150.8px;width:110.0px;height:22.5px;background:#dde3fb;"></div>
<div class="b" style="left:698.4px;top:1150.8px;width:109.6px;height:22.5px;background:#dde3fb;"></div>
<div class="b" style="left:810.0px;top:1150.8px;width:120.8px;height:22.5px;background:#dde3fb;"></div>
<div class="t" style="left:328.6px;width:600px;text-align:right;top:1155.6px;font-size:14.90px;line-height:14.90px;color:#15151c;"><span style="display:inline-block;transform:scaleX(1.0117);transform-origin:right center;">591,800.00</span></div>
<div class="b" style="left:135.0px;top:1175.3px;width:129.6px;height:22.5px;background:#cfd5f0;"></div>
<div class="b" style="left:266.4px;top:1175.3px;width:319.2px;height:22.5px;background:#cfd5f0;"></div>
<div class="b" style="left:587.0px;top:1175.3px;width:110.0px;height:22.5px;background:#cfd5f0;"></div>
<div class="b" style="left:698.4px;top:1175.3px;width:109.6px;height:22.5px;background:#cfd5f0;"></div>
<div class="b" style="left:810.0px;top:1175.3px;width:120.8px;height:22.5px;background:#cfd5f0;"></div>
<div class="t" style="left:328.6px;width:600px;text-align:right;top:1180.1px;font-size:14.90px;line-height:14.90px;color:#15151c;"><span style="display:inline-block;transform:scaleX(1.0117);transform-origin:right center;">591,800.00</span></div>
<div class="b" style="left:135.0px;top:1199.8px;width:129.6px;height:22.5px;background:#dde3fb;"></div>
<div class="b" style="left:266.4px;top:1199.8px;width:319.2px;height:22.5px;background:#dde3fb;"></div>
<div class="b" style="left:587.0px;top:1199.8px;width:110.0px;height:22.5px;background:#dde3fb;"></div>
<div class="b" style="left:698.4px;top:1199.8px;width:109.6px;height:22.5px;background:#dde3fb;"></div>
<div class="b" style="left:810.0px;top:1199.8px;width:120.8px;height:22.5px;background:#dde3fb;"></div>
<div class="t" style="left:328.6px;width:600px;text-align:right;top:1204.5px;font-size:14.90px;line-height:14.90px;color:#15151c;"><span style="display:inline-block;transform:scaleX(1.0117);transform-origin:right center;">591,800.00</span></div>
<div class="b" style="left:135.0px;top:1224.2px;width:129.6px;height:22.5px;background:#cfd5f0;"></div>
<div class="b" style="left:266.4px;top:1224.2px;width:319.2px;height:22.5px;background:#cfd5f0;"></div>
<div class="b" style="left:587.0px;top:1224.2px;width:110.0px;height:22.5px;background:#cfd5f0;"></div>
<div class="b" style="left:698.4px;top:1224.2px;width:109.6px;height:22.5px;background:#cfd5f0;"></div>
<div class="b" style="left:810.0px;top:1224.2px;width:120.8px;height:22.5px;background:#cfd5f0;"></div>
<div class="t" style="left:328.6px;width:600px;text-align:right;top:1229.0px;font-size:14.90px;line-height:14.90px;color:#15151c;"><span style="display:inline-block;transform:scaleX(1.0117);transform-origin:right center;">591,800.00</span></div>
<div class="b" style="left:134.0px;top:1248.7px;width:800.0px;height:4.4px;background:#77767a;"></div>
</div>
<div class="b" style="left:1345.0px;top:54.0px;width:7.4px;height:718.0px;background:#6b6b6d;border-radius:4px;"></div>
<div class="b" style="left:348.4px;top:55.6px;width:93.6px;height:48.8px;background:#ececed;border-radius:10px;border:1px solid #e1e1e2;box-sizing:border-box;box-shadow:0 1px 3px rgba(0,0,0,.10);"></div>
<svg class="b" style="left:362.0px;top:65.0px;stroke-width:1.4;" width="26.0" height="27.0" viewBox="0 0 26 27" fill="none" stroke="#222" stroke-width="1.5" stroke-linecap="round" stroke-linejoin="round"><polygon points="7.2,2.7 8.7,6.0 12.2,6.4 9.6,8.8 10.3,12.3 7.2,10.5 4.1,12.3 4.8,8.8 2.2,6.4 5.7,6.0"/><path d="M16.4 12 L19.8 7.4 L23 12"/><circle cx="14.6" cy="4.4" r="1.9"/><rect x="2.2" y="12" width="21.6" height="13.6" rx="4.2" fill="#ececed"/><rect x="9" y="15.8" width="8" height="2.8" rx="1.4"/></svg>
<div class="t" style="left:395.6px;top:73.9px;font-size:14.60px;line-height:14.60px;font-weight:700;color:#151515;"><span style="display:inline-block;transform:scaleX(0.8931);transform-origin:left center;">Tools</span></div>
<div class="b" style="left:672.0px;top:55.6px;width:354.0px;height:48.8px;background:#ececed;border-radius:10px;border:1px solid #e1e1e2;box-sizing:border-box;box-shadow:0 1px 3px rgba(0,0,0,.10);"></div>
<svg class="b" style="left:685.0px;top:68.0px;stroke-width:1.5;" width="23.0" height="25.0" viewBox="0 0 23 25" fill="none" stroke="#222" stroke-width="1.5" stroke-linecap="round" stroke-linejoin="round"><path d="M3 2.6 L20 13 L11.4 15 L7 22.6 Z"/></svg>
<svg class="b" style="left:720.0px;top:77.0px;stroke-width:1.5;" width="10.0" height="6.4" viewBox="0 0 10 6.4" fill="none" stroke="#222" stroke-width="1.5" stroke-linecap="round" stroke-linejoin="round"><path d="M1 1 L5 5 L9 1"/></svg>
<div class="b" style="left:744.0px;top:73.0px;width:1.0px;height:15.0px;background:#d4d4d6;"></div>
<div class="b" style="left:755.0px;top:60.0px;width:40.0px;height:40.0px;background:#7074f7;border-radius:9px;"></div>
<div class="t" style="left:474.6px;width:600px;text-align:center;top:67.9px;font-size:26.50px;line-height:26.50px;font-family:'DejaVu Serif', 'Liberation Serif', serif;color:#fff;-webkit-text-stroke:0.55px #7074f7;"><span style="display:inline-block;transform:scaleX(1.3600);transform-origin:center center;">T</span></div>
<svg class="b" style="left:812.0px;top:67.5px;" width="26.0" height="25.0" viewBox="0 0 26 25" fill="none" stroke="#222" stroke-width="1.5" stroke-linecap="round" stroke-linejoin="round"><rect x="2.2" y="2" width="21.6" height="21" rx="5.2"/><circle cx="7.6" cy="7.6" r="0.9" fill="#222"/><path d="M5.6 22.6 C6.8 17 14 12.8 23.6 13"/><path d="M11.6 23 C11.8 20 13.4 17.6 16.2 16.4"/></svg>
<svg class="b" style="left:862.0px;top:67.5px;" width="28.0" height="25.0" viewBox="0 0 28 25" fill="none" stroke="#222" stroke-width="1.5" stroke-linecap="round" stroke-linejoin="round"><path d="M10.4 23 H6.6 a4.4 4.4 0 0 1 -4.4 -4.4 V6.4 A4.4 4.4 0 0 1 6.6 2 H19.4 a4.4 4.4 0 0 1 4.4 4.4 V12"/><path d="M2.4 7.2 H23.6"/><path d="M5.4 4.6 H7"/><path d="M16.4 23.2 H15 a3 3 0 0 1 0 -6 H16.4 M20.6 17.2 H22 a3 3 0 0 1 0 6 H20.6 M15.6 20.2 H21.4"/></svg>
<svg class="b" style="left:913.5px;top:67.5px;" width="24.0" height="25.0" viewBox="0 0 24 25" fill="none" stroke="#222" stroke-width="1.5" stroke-linecap="round" stroke-linejoin="round"><path d="M9.4 23 H6 a4.4 4.4 0 0 1 -4.4 -4.4 V6.4 A4.4 4.4 0 0 1 6 2 H15 C17.6 2 20.2 4.2 20.4 7.6 V10.4"/><path d="M17.4 13 C20 13 22 14.8 22 17.2 C22 19.6 19.6 21.8 17.4 24 C15.2 21.8 12.8 19.6 12.8 17.2 C12.8 14.8 14.8 13 17.4 13 Z"/><circle cx="17.4" cy="17.2" r="1.3"/></svg>
<div class="b" style="left:955.0px;top:73.0px;width:1.0px;height:15.0px;background:#d4d4d6;"></div>
<div class="b" style="left:967.0px;top:61.0px;width:54.0px;height:38.0px;background:#dfdfe0;border-radius:8px;"></div>
<div class="t" style="left:976.2px;top:74.1px;font-size:14.00px;line-height:14.00px;color:#222;"><span style="display:inline-block;transform:scaleX(0.9498);transform-origin:left center;">Close</span></div>
<div class="b" style="left:1142.0px;top:55.6px;width:208.4px;height:48.8px;background:#ececed;border-radius:10px;border:1px solid #e1e1e2;box-sizing:border-box;box-shadow:0 1px 3px rgba(0,0,0,.10);"></div>
<svg class="b" style="left:1156.0px;top:70.0px;" width="20.0" height="18.0" viewBox="0 0 20 18" fill="none" stroke="#222" stroke-width="1.5" stroke-linecap="round" stroke-linejoin="round"><path d="M7.4 2.6 L3.6 5.8 L7.4 8.8"/><path d="M4 5.8 H12.6 a4.9 4.9 0 0 1 0 9.8 H4.4"/></svg>
<svg class="b" style="left:1201.0px;top:70.0px;stroke:#bdbdbf;" width="20.0" height="18.0" viewBox="0 0 20 18" fill="none" stroke="#222" stroke-width="1.5" stroke-linecap="round" stroke-linejoin="round"><path d="M12.6 2.6 L16.4 5.8 L12.6 8.8"/><path d="M16 5.8 H7.8 a4.9 4.9 0 0 0 0 9.8 H16.2"/></svg>
<div class="b" style="left:1236.0px;top:73.0px;width:1.0px;height:15.0px;background:#d8d8da;"></div>
<svg class="b" style="left:1251.5px;top:67.5px;stroke-width:1.5;" width="23.0" height="25.0" viewBox="0 0 23 25" fill="none" stroke="#222" stroke-width="1.5" stroke-linecap="round" stroke-linejoin="round"><rect x="2" y="2" width="19" height="21" rx="4.6"/><path d="M7 2.2 V3.8 a2.2 2.2 0 0 0 2.2 2.2 H13.8 a2.2 2.2 0 0 0 2.2 -2.2 V2.2"/><circle cx="11.5" cy="15.1" r="3.1"/></svg>
<svg class="b" style="left:1286.4px;top:77.4px;stroke-width:1.5;" width="9.6" height="6.0" viewBox="0 0 9.6 6" fill="none" stroke="#222" stroke-width="1.5" stroke-linecap="round" stroke-linejoin="round"><path d="M1 1.2 L4.8 4.8 L8.6 1.2"/></svg>
<div class="b" style="left:1310.0px;top:65.0px;width:30.0px;height:30.0px;background:linear-gradient(180deg,#5868ee 0%,#4a8cf0 50%,#6ad8f7 100%);border-radius:50%;"></div>
<svg class="b" style="left:1314.0px;top:69.0px;stroke:#eaf6ff;stroke-width:1.1;opacity:.95;" width="22.0" height="22.0" viewBox="0 0 22 22" fill="none" stroke="#222" stroke-width="1.5" stroke-linecap="round" stroke-linejoin="round"><ellipse cx="11" cy="11" rx="5" ry="8.6" transform="rotate(15 11 11)"/><ellipse cx="11" cy="11" rx="5" ry="8.6" transform="rotate(75 11 11)"/><ellipse cx="11" cy="11" rx="5" ry="8.6" transform="rotate(135 11 11)"/><path d="M11 9 L11.7 10.3 L13 11 L11.7 11.7 L11 13 L10.3 11.7 L9 11 L10.3 10.3 Z" fill="#fff" stroke="none"/></svg>
<div class="b" style="left:1354.0px;top:51.0px;width:378.0px;height:944.0px;background:#e9eaea;"></div>
<div class="b" style="left:1725.0px;top:40.0px;width:10.0px;height:955.0px;background:#f5f5f5;"></div>
<div class="b" style="left:1354.0px;top:958.0px;width:4.0px;height:40.0px;background:#f5f5f5;"></div>
<div class="b" style="left:1722.0px;top:958.0px;width:4.0px;height:40.0px;background:#f5f5f5;"></div>
<div class="b" style="left:1363.0px;top:60.0px;width:3.0px;height:890.0px;background:#eef0f8;"></div>
<div class="b" style="left:1354.0px;top:51.6px;width:371.0px;height:907.0px;background:transparent;border:9px solid #4145cd;border-radius:5px;box-sizing:border-box;"></div>
<div class="t" style="left:1377.4px;top:73.9px;font-size:14.30px;line-height:14.30px;font-weight:700;color:#151515;"><span style="display:inline-block;transform:scaleX(0.9875);transform-origin:left center;">Align Objects</span></div>
<svg class="b" style="left:1698.0px;top:70.0px;stroke-width:1.3;" width="11.0" height="11.0" viewBox="0 0 11 11" fill="none" stroke="#222" stroke-width="1.5" stroke-linecap="round" stroke-linejoin="round"><path d="M1.2 1.2 L9.6 9.6 M9.6 1.2 L1.2 9.6"/></svg>
<svg class="b" style="left:1385.0px;top:117px" width="26" height="26" viewBox="-13 -13 26 26" fill="none" stroke-linecap="butt"><path d="M-7 -9.6 V8.8" stroke="#2a2a2a" stroke-width="1.8"/><path d="M-4 -3.6 H8 M-4 3.8 H4.5" stroke="#8c8c8e" stroke-width="1.6"/></svg>
<svg class="b" style="left:1433.5px;top:117px" width="26" height="26" viewBox="-13 -13 26 26" fill="none" stroke-linecap="butt"><path d="M0 -9.6 V8.8" stroke="#2a2a2a" stroke-width="1.8"/><path d="M-8.5 -3.6 H8.5 M-5.5 3.8 H5.5" stroke="#8c8c8e" stroke-width="1.6"/></svg>
<svg class="b" style="left:1482.0px;top:117px" width="26" height="26" viewBox="-13 -13 26 26" fill="none" stroke-linecap="butt"><path d="M6 -9.6 V8.8" stroke="#2a2a2a" stroke-width="1.8"/><path d="M-9 -3.6 H3 M-5.5 3.8 H3" stroke="#8c8c8e" stroke-width="1.6"/></svg>
<svg class="b" style="left:1530.0px;top:117px" width="26" height="26" viewBox="-13 -13 26 26" fill="none" stroke-linecap="butt"><path d="M-9.4 -6.6 H9.4" stroke="#2a2a2a" stroke-width="1.6"/><path d="M-3.8 -3.4 V7 M3.6 -3.4 V3" stroke="#8c8c8e" stroke-width="1.8"/></svg>
<svg class="b" style="left:1578.0px;top:117px" width="26" height="26" viewBox="-13 -13 26 26" fill="none" stroke-linecap="butt"><path d="M-9.4 0 H9.4" stroke="#2a2a2a" stroke-width="1.6"/><path d="M-3.8 -8 V8 M3.6 -5 V5" stroke="#8c8c8e" stroke-width="1.8"/></svg>
<svg class="b" style="left:1626.0px;top:117px" width="26" height="26" viewBox="-13 -13 26 26" fill="none" stroke-linecap="butt"><path d="M-9.4 7.2 H9.4" stroke="#2a2a2a" stroke-width="1.6"/><path d="M-3.8 -7 V4 M3.6 -3 V4" stroke="#8c8c8e" stroke-width="1.8"/></svg>
<div class="b" style="left:1681.3px;top:129.4px;width:2.2px;height:2.2px;background:#222;border-radius:50%;"></div>
<div class="b" style="left:1686.9px;top:129.4px;width:2.2px;height:2.2px;background:#222;border-radius:50%;"></div>
<div class="b" style="left:1692.5px;top:129.4px;width:2.2px;height:2.2px;background:#222;border-radius:50%;"></div>
<div class="b" style="left:1377.0px;top:175.0px;width:332.0px;height:1.0px;background:#dfe0e0;"></div>
<div class="t" style="left:1377.4px;top:215.9px;font-size:14.30px;line-height:14.30px;font-weight:700;color:#151515;"><span style="display:inline-block;transform:scaleX(1.0233);transform-origin:left center;">Format</span></div>
<div class="b" style="left:1379.0px;top:253.0px;width:227.0px;height:36.6px;background:#f4f5f5;border-radius:9px;border:1px solid #e2e3e3;box-sizing:border-box;box-shadow:0 1px 2px rgba(0,0,0,.06);"></div>
<div class="t" style="left:1391.0px;top:265.6px;font-size:14.60px;line-height:14.60px;color:#222;"><span style="display:inline-block;transform:scaleX(0.9889);transform-origin:left center;">CIDFont+F1</span></div>
<svg class="b" style="left:1581.9px;top:268.2px;stroke:#222;stroke-width:1.35;" width="8.6" height="5.4" viewBox="0 0 8.6 5.4" fill="none" stroke="#222" stroke-width="1.5" stroke-linecap="round" stroke-linejoin="round"><path d="M0.9 0.9 L4.3 4.3 L7.7 0.9"/></svg>
<div class="b" style="left:1619.0px;top:253.0px;width:88.0px;height:36.6px;background:#f4f5f5;border-radius:9px;border:1px solid #e2e3e3;box-sizing:border-box;box-shadow:0 1px 2px rgba(0,0,0,.06);"></div>
<div class="t" style="left:1629.0px;top:265.6px;font-size:14.60px;line-height:14.60px;color:#222;"><span style="display:inline-block;transform:scaleX(0.9481);transform-origin:left center;">11.02</span></div>
<svg class="b" style="left:1681.7px;top:268.2px;stroke:#222;stroke-width:1.35;" width="8.6" height="5.4" viewBox="0 0 8.6 5.4" fill="none" stroke="#222" stroke-width="1.5" stroke-linecap="round" stroke-linejoin="round"><path d="M0.9 0.9 L4.3 4.3 L7.7 0.9"/></svg>
<div class="b" style="left:1382.6px;top:326.0px;width:30.0px;height:30.0px;background:#ffdd47;border-radius:50%;box-shadow:inset 0 0 0 1px rgba(0,0,0,.08);"></div>
<div class="b" style="left:1430.1px;top:326.0px;width:30.0px;height:30.0px;background:#48ef78;border-radius:50%;box-shadow:inset 0 0 0 1px rgba(0,0,0,.08);"></div>
<div class="b" style="left:1477.6px;top:326.0px;width:30.0px;height:30.0px;background:#46e8fb;border-radius:50%;box-shadow:inset 0 0 0 1px rgba(0,0,0,.08);"></div>
<div class="b" style="left:1525.1px;top:326.0px;width:30.0px;height:30.0px;background:#909ffa;border-radius:50%;box-shadow:inset 0 0 0 1px rgba(0,0,0,.08);"></div>
<div class="b" style="left:1572.6px;top:326.0px;width:30.0px;height:30.0px;background:#fb78ef;border-radius:50%;box-shadow:inset 0 0 0 1px rgba(0,0,0,.08);"></div>
<div class="b" style="left:1620.1px;top:326.0px;width:30.0px;height:30.0px;background:#fb8067;border-radius:50%;box-shadow:inset 0 0 0 1px rgba(0,0,0,.08);"></div>
<div class="b" style="left:1662.9px;top:321.5px;width:39.0px;height:39.0px;background:#cfd0d1;border-radius:50%;"></div>
<div class="b" style="left:1667.4px;top:326.0px;width:30.0px;height:30.0px;background:conic-gradient(#38b6f0,#7a5cf0,#e648c8,#f0604a,#f0d040,#58d868,#38b6f0);border-radius:50%;"></div>
<div class="b" style="left:1671.9px;top:330.5px;width:21.0px;height:21.0px;background:#050505;border-radius:50%;"></div>
<div class="b" style="left:1378.0px;top:391.0px;width:70.6px;height:40.0px;background:#7378f7;border-radius:9px;"></div>
<div class="b" style="left:1550.0px;top:461.0px;width:71.0px;height:40.0px;background:#7378f7;border-radius:9px;"></div>
<svg class="b" style="left:1400.0px;top:398.0px" width="26" height="26" viewBox="-13 -13 26 26" fill="none" stroke="#fff" stroke-width="1.4" stroke-linecap="butt"><path d="M-10.0 -9.8 H10.0"/><path d="M-10.0 -3.4 H2.0"/><path d="M-10.0 3.0 H10.0"/><path d="M-10.0 9.4 H2.0"/></svg>
<svg class="b" style="left:1486.0px;top:398.0px" width="26" height="26" viewBox="-13 -13 26 26" fill="none" stroke="#2a2a2a" stroke-width="1.4" stroke-linecap="butt"><path d="M-10.0 -9.8 H10.0"/><path d="M-6.0 -3.4 H6.0"/><path d="M-10.0 3.0 H10.0"/><path d="M-6.0 9.4 H6.0"/></svg>
<svg class="b" style="left:1572.0px;top:398.0px" width="26" height="26" viewBox="-13 -13 26 26" fill="none" stroke="#2a2a2a" stroke-width="1.4" stroke-linecap="butt"><path d="M-10.0 -9.8 H10.0"/><path d="M-2.0 -3.4 H10.0"/><path d="M-10.0 3.0 H10.0"/><path d="M-2.0 9.4 H10.0"/></svg>
<svg class="b" style="left:1658.0px;top:398.0px" width="26" height="26" viewBox="-13 -13 26 26" fill="none" stroke="#2a2a2a" stroke-width="1.4" stroke-linecap="butt"><path d="M-10.0 -9.8 H10.0"/><path d="M-10.0 -3.4 H10.0"/><path d="M-10.0 3.0 H10.0"/><path d="M-10.0 9.4 H6.0"/></svg>
<div class="t" style="left:1113.0px;width:600px;text-align:center;top:468.7px;font-size:23.50px;line-height:23.50px;font-family:'DejaVu Serif', 'Liberation Serif', serif;color:#2a2a2a;-webkit-text-stroke:0.55px #e9eaea;"><span style="display:inline-block;transform:scaleX(1.1500);transform-origin:center center;">U</span></div>
<div class="b" style="left:1403.4px;top:491.0px;width:19.4px;height:1.3px;background:#2a2a2a;"></div>
<div class="t" style="left:1199.0px;width:600px;text-align:center;top:467.3px;font-size:29.00px;line-height:29.00px;font-family:'DejaVu Serif', 'Liberation Serif', serif;color:#2a2a2a;-webkit-text-stroke:0.6px #e9eaea;"><span style="display:inline-block;transform:scaleX(0.8800);transform-origin:center center;">S</span></div>
<div class="b" style="left:1489.0px;top:481.0px;width:20.0px;height:1.4px;background:#2a2a2a;"></div>
<div class="b" style="left:1491.0px;top:478.6px;width:16.0px;height:2.4px;background:#e9eaea;"></div>
<div class="b" style="left:1491.0px;top:482.4px;width:16.0px;height:2.4px;background:#e9eaea;"></div>
<div class="t" style="left:1285.6px;width:600px;text-align:center;top:466.6px;font-size:30.00px;line-height:30.00px;font-family:'DejaVu Serif', 'Liberation Serif', serif;color:#fff;-webkit-text-stroke:0.6px #7378f7;"><span style="display:inline-block;transform:scaleX(0.9400);transform-origin:center center;">B</span></div>
<div class="t" style="left:1370.6px;width:600px;text-align:center;top:466.6px;font-size:30.00px;line-height:30.00px;font-family:'DejaVu Serif', 'Liberation Serif', serif;color:#2a2a2a;font-style:italic;-webkit-text-stroke:0.6px #e9eaea;"><span style="display:inline-block;transform:scaleX(1.1500);transform-origin:center center;">I</span></div>
<div class="t" style="left:1402.0px;top:539.3px;font-size:24.00px;line-height:24.00px;color:#2a2a2a;"><span style="display:inline-block;transform:scaleX(0.9000);transform-origin:left center;">A</span></div>
<div class="t" style="left:1418.6px;top:540.7px;font-size:11.50px;line-height:11.50px;color:#2a2a2a;"><span style="display:inline-block;">2</span></div>
<div class="t" style="left:1488.0px;top:539.3px;font-size:24.00px;line-height:24.00px;color:#2a2a2a;"><span style="display:inline-block;transform:scaleX(0.9000);transform-origin:left center;">A</span></div>
<div class="t" style="left:1503.6px;top:552.9px;font-size:11.50px;line-height:11.50px;color:#2a2a2a;"><span style="display:inline-block;">2</span></div>
<svg class="b" style="left:1572.0px;top:538.0px" width="26" height="26" viewBox="-13 -13 26 26" fill="none" stroke="#2a2a2a" stroke-width="1.4" stroke-linecap="butt"><path d="M-10.0 -9.8 H10.0"/><path d="M-3.0 -3.4 H10.0"/><path d="M-3.0 3.0 H10.0"/><path d="M-10.0 9.6 H10.0"/></svg>
<svg class="b" style="left:1574.6px;top:547.6px" width="6" height="7" viewBox="0 0 6 7"><path d="M5.6 0.2 V6.6 L0.2 3.4 Z" fill="#222"/></svg>
<svg class="b" style="left:1658.0px;top:538.0px" width="26" height="26" viewBox="-13 -13 26 26" fill="none" stroke="#2a2a2a" stroke-width="1.4" stroke-linecap="butt"><path d="M-10.0 -9.8 H10.0"/><path d="M-3.0 -3.4 H10.0"/><path d="M-3.0 3.0 H10.0"/><path d="M-10.0 9.6 H10.0"/></svg>
<svg class="b" style="left:1660.6px;top:547.6px" width="6" height="7" viewBox="0 0 6 7"><path d="M0.2 0.2 V6.6 L5.6 3.4 Z" fill="#222"/></svg>
<div class="b" style="left:1377.0px;top:596.4px;width:332.0px;height:1.0px;background:#dfe0e0;"></div>
<div class="t" style="left:1377.4px;top:636.9px;font-size:14.30px;line-height:14.30px;font-weight:700;color:#151515;"><span style="display:inline-block;transform:scaleX(0.9665);transform-origin:left center;">Line Spacing</span></div>
<div class="b" style="left:1379.0px;top:674.0px;width:187.0px;height:36.6px;background:#f4f5f5;border-radius:9px;border:1px solid #e2e3e3;box-sizing:border-box;box-shadow:0 1px 2px rgba(0,0,0,.06);"></div>
<div class="t" style="left:1391.6px;top:686.6px;font-size:14.60px;line-height:14.60px;color:#222;"><span style="display:inline-block;transform:scaleX(0.8841);transform-origin:left center;">120%</span></div>
<svg class="b" style="left:1541.7px;top:689.8px;stroke:#222;stroke-width:1.35;" width="8.6" height="5.4" viewBox="0 0 8.6 5.4" fill="none" stroke="#222" stroke-width="1.5" stroke-linecap="round" stroke-linejoin="round"><path d="M0.9 0.9 L4.3 4.3 L7.7 0.9"/></svg>
<div class="b" style="left:1577.6px;top:673.0px;width:60.0px;height:39.4px;background:#f3f4f4;border-radius:10px;"></div>
<div class="b" style="left:1647.0px;top:673.0px;width:60.0px;height:39.4px;background:#f1f2f2;border-radius:10px;"></div>
<svg class="b" style="left:1600.0px;top:684.6px;stroke-width:1.3;stroke-linecap:butt;" width="15.0" height="15.0" viewBox="0 0 15 15" fill="none" stroke="#222" stroke-width="1.5" stroke-linecap="round" stroke-linejoin="round"><path d="M7.5 0.6 V14.4 M0.6 7.5 H14.4"/></svg>
<div class="b" style="left:1670.0px;top:691.4px;width:14.0px;height:1.2px;background:#b9b9bb;"></div>
<div class="t" style="left:1377.4px;top:736.9px;font-size:14.30px;line-height:14.30px;font-weight:700;color:#151515;"><span style="display:inline-block;transform:scaleX(1.0077);transform-origin:left center;">Paragraph Spacing After</span></div>
<div class="b" style="left:1379.0px;top:774.4px;width:187.0px;height:36.6px;background:#f4f5f5;border-radius:9px;border:1px solid #e2e3e3;box-sizing:border-box;box-shadow:0 1px 2px rgba(0,0,0,.06);"></div>
<div class="t" style="left:1391.6px;top:787.0px;font-size:14.60px;line-height:14.60px;color:#222;"><span style="display:inline-block;">0</span></div>
<svg class="b" style="left:1541.7px;top:790.2px;stroke:#222;stroke-width:1.35;" width="8.6" height="5.4" viewBox="0 0 8.6 5.4" fill="none" stroke="#222" stroke-width="1.5" stroke-linecap="round" stroke-linejoin="round"><path d="M0.9 0.9 L4.3 4.3 L7.7 0.9"/></svg>
<div class="b" style="left:1577.6px;top:773.4px;width:60.0px;height:39.4px;background:#f3f4f4;border-radius:10px;"></div>
<div class="b" style="left:1647.0px;top:773.4px;width:60.0px;height:39.4px;background:#f1f2f2;border-radius:10px;"></div>
<svg class="b" style="left:1600.0px;top:785.0px;stroke-width:1.3;stroke-linecap:butt;" width="15.0" height="15.0" viewBox="0 0 15 15" fill="none" stroke="#222" stroke-width="1.5" stroke-linecap="round" stroke-linejoin="round"><path d="M7.5 0.6 V14.4 M0.6 7.5 H14.4"/></svg>
<div class="b" style="left:1670.0px;top:791.8px;width:14.0px;height:1.2px;background:#b9b9bb;"></div>
<div class="t" style="left:1377.4px;top:837.1px;font-size:14.30px;line-height:14.30px;font-weight:700;color:#151515;"><span style="display:inline-block;transform:scaleX(0.9814);transform-origin:left center;">Character Spacing</span></div>
<div class="b" style="left:1379.0px;top:874.4px;width:187.0px;height:36.6px;background:#f4f5f5;border-radius:9px;border:1px solid #e2e3e3;box-sizing:border-box;box-shadow:0 1px 2px rgba(0,0,0,.06);"></div>
<div class="t" style="left:1391.6px;top:887.0px;font-size:14.60px;line-height:14.60px;color:#222;"><span style="display:inline-block;">0</span></div>
<svg class="b" style="left:1541.7px;top:890.2px;stroke:#222;stroke-width:1.35;" width="8.6" height="5.4" viewBox="0 0 8.6 5.4" fill="none" stroke="#222" stroke-width="1.5" stroke-linecap="round" stroke-linejoin="round"><path d="M0.9 0.9 L4.3 4.3 L7.7 0.9"/></svg>
<div class="b" style="left:1577.6px;top:873.4px;width:60.0px;height:39.4px;background:#f3f4f4;border-radius:10px;"></div>
<div class="b" style="left:1647.0px;top:873.4px;width:60.0px;height:39.4px;background:#f1f2f2;border-radius:10px;"></div>
<svg class="b" style="left:1600.0px;top:885.0px;stroke-width:1.3;stroke-linecap:butt;" width="15.0" height="15.0" viewBox="0 0 15 15" fill="none" stroke="#222" stroke-width="1.5" stroke-linecap="round" stroke-linejoin="round"><path d="M7.5 0.6 V14.4 M0.6 7.5 H14.4"/></svg>
<div class="b" style="left:1670.0px;top:891.8px;width:14.0px;height:1.2px;background:#b9b9bb;"></div>
<div class="b" style="left:1383.0px;top:938.6px;width:321.0px;height:1.0px;background:#e0e1e1;"></div>
<div class="t" style="left:1377.4px;top:977.5px;font-size:14.30px;line-height:14.30px;font-weight:700;color:#ababad;"><span style="display:inline-block;transform:scaleX(1.0069);transform-origin:left center;">Arrange Objects</span></div>
</body></html>
